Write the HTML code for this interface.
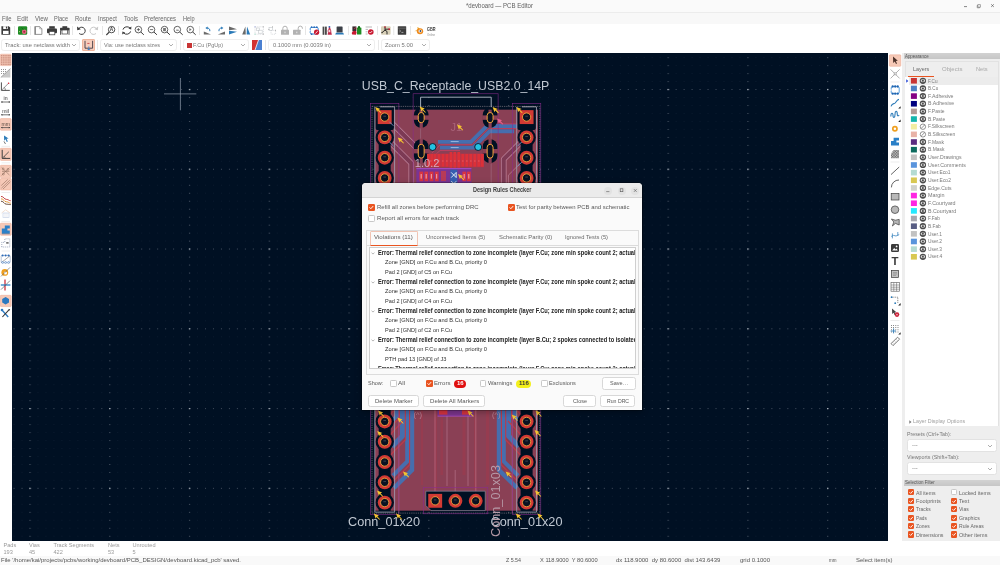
<!DOCTYPE html><html><head><meta charset="utf-8"><title>devboard — PCB Editor</title><style>
*{box-sizing:border-box;margin:0;padding:0}
html,body{width:1000px;height:565px;overflow:hidden;background:#fff;font-family:"Liberation Sans",sans-serif;color:#5c5c5c}
.abs{position:absolute}
.t{position:absolute;white-space:nowrap;line-height:1}
#root{position:absolute;left:0;top:0;width:1000px;height:565px;will-change:transform;overflow:hidden}
#title{left:0;top:0;width:1000px;height:13.3px;background:#fafafa;border-bottom:0.8px solid #ececec}
#menu{left:0;top:13.3px;width:1000px;height:10.4px;background:#f8f8f8}
#tb1{left:0;top:23.7px;width:1000px;height:29px;background:#fff}
.dd{position:absolute;top:39.2px;height:12px;border:0.7px solid #eeeeee;border-radius:2.8px;background:#fff}
.sep{position:absolute;width:0.8px;background:#e8e8e8}
#canvas{left:12px;top:53px;width:876px;height:488px;background:#001023;overflow:hidden}
#ltb{left:0;top:53px;width:12px;height:488px;background:#fff}
#rtb{left:888px;top:53px;width:14.4px;height:488px;background:#fff}
#app{left:902.4px;top:53px;width:97.6px;height:425px;background:#eeeeee}
#self{left:902.4px;top:478px;width:97.6px;height:63px;background:#eeeeee}
#msg{left:0;top:541px;width:1000px;height:15px;background:#fff}
#status{left:0;top:556px;width:1000px;height:9px;background:#f9f9f9}
.cb{position:absolute;width:6.6px;height:6.6px;border-radius:1.3px;background:#e95420}
.cbo{position:absolute;width:6.6px;height:6.6px;border-radius:1.3px;background:#fff;border:0.6px solid #c8c8c8}
</style></head><body><div id="root">
<div id="title" class="abs"></div>
<div class="t" style="left:466px;top:3px;font-size:6.3px;color:#606060;transform:scaleX(0.9619);transform-origin:0 0;">*devboard — PCB Editor</div>
<svg class="abs" style="left:920px;top:0" width="80" height="13" viewBox="920 0 80 13"><g stroke="#555" stroke-width="0.7" fill="none"><path d="M964 6.6h3"/><path d="M977.8 4.6h2.6v2.6h-2.6z M977.8 5.4h-0.6v2.4h2.4v-0.6" stroke-width="0.5"/><path d="M991.2 4.3l2.6 2.6m0-2.6l-2.6 2.6"/></g></svg>
<div id="menu" class="abs"></div>
<div class="t" style="left:1.5px;top:16px;font-size:6.3px;color:#666;transform:scaleX(0.9354);transform-origin:0 0;">File</div>
<div class="t" style="left:17px;top:16px;font-size:6.3px;color:#666;transform:scaleX(1.0129);transform-origin:0 0;">Edit</div>
<div class="t" style="left:35px;top:16px;font-size:6.3px;color:#666;transform:scaleX(0.9596);transform-origin:0 0;">View</div>
<div class="t" style="left:54px;top:16px;font-size:6.3px;color:#666;transform:scaleX(0.8880);transform-origin:0 0;">Place</div>
<div class="t" style="left:75px;top:16px;font-size:6.3px;color:#666;transform:scaleX(0.9517);transform-origin:0 0;">Route</div>
<div class="t" style="left:97.5px;top:16px;font-size:6.3px;color:#666;transform:scaleX(0.9354);transform-origin:0 0;">Inspect</div>
<div class="t" style="left:123.5px;top:16px;font-size:6.3px;color:#666;transform:scaleX(0.9522);transform-origin:0 0;">Tools</div>
<div class="t" style="left:144px;top:16px;font-size:6.3px;color:#666;transform:scaleX(0.9425);transform-origin:0 0;">Preferences</div>
<div class="t" style="left:182.5px;top:16px;font-size:6.3px;color:#666;transform:scaleX(0.8878);transform-origin:0 0;">Help</div>
<div id="tb1" class="abs"></div>
<svg class="abs" style="left:0;top:24px" width="450" height="14" viewBox="0 24 450 14">
<rect x="14.0" y="26" width="0.8" height="9" fill="#e0e0e0"/>
<rect x="30.0" y="26" width="0.8" height="9" fill="#e0e0e0"/>
<rect x="72.19999999999999" y="26" width="0.8" height="9" fill="#e0e0e0"/>
<rect x="102.0" y="26" width="0.8" height="9" fill="#e0e0e0"/>
<rect x="118.0" y="26" width="0.8" height="9" fill="#e0e0e0"/>
<rect x="199.2" y="26" width="0.8" height="9" fill="#e0e0e0"/>
<rect x="305.20000000000005" y="26" width="0.8" height="9" fill="#e0e0e0"/>
<rect x="348.0" y="26" width="0.8" height="9" fill="#e0e0e0"/>
<rect x="377.0" y="26" width="0.8" height="9" fill="#e0e0e0"/>
<rect x="393.40000000000003" y="26" width="0.8" height="9" fill="#e0e0e0"/>
<rect x="410.20000000000005" y="26" width="0.8" height="9" fill="#e0e0e0"/>
<path d="M1.4 26.2h7.4l1.4 1.4v7.2h-8.8z" fill="#3c3c3c"/><rect x="3.2" y="26.2" width="4.6" height="2.8" fill="#fff"/><rect x="5.9" y="26.6" width="1.2" height="2" fill="#3c3c3c"/><rect x="3" y="30.8" width="5.6" height="3.2" fill="#fff"/>
<rect x="18" y="26.2" width="9.2" height="8.6" rx="1.2" fill="#1e8c24"/><circle cx="24.2" cy="31.8" r="2.4" fill="#e06a80"/><circle cx="24.2" cy="31.8" r="1" fill="#b02040"/><circle cx="19.8" cy="31.6" r="0.7" fill="#e8f0a0"/><path d="M19.8 31.6h2M21.5 27.5l2 2" stroke="#0c5c14" stroke-width="0.6"/>
<path d="M35.3 26.6h4.4l2.2 2.2v5.6h-6.6z" fill="#fff" stroke="#8c8c8c" stroke-width="0.9"/><path d="M39.7 26.6v2.2h2.2" fill="none" stroke="#8c8c8c" stroke-width="0.6"/><path d="M35 26.3v8.6" stroke="#6a6a6a" stroke-width="0.9"/>
<rect x="49.2" y="26.2" width="5.6" height="2.6" fill="#3c3c3c"/><rect x="47" y="28.6" width="10" height="4.6" rx="1" fill="#3c3c3c"/><rect x="49.2" y="31.4" width="5.6" height="3.4" fill="#fff" stroke="#3c3c3c" stroke-width="0.7"/>
<rect x="62.4" y="26.2" width="4.8" height="2" fill="#3c3c3c"/><rect x="60" y="27.8" width="9.6" height="2.8" rx="0.6" fill="#3c3c3c"/><rect x="62" y="30" width="5.6" height="4" fill="#fff" stroke="#3c3c3c" stroke-width="0.7"/><path d="M60.6 30.4v4.4M69 30.4v4.4" stroke="#3c3c3c" stroke-width="0.9"/>
<path d="M78.2 29.6a3.6 3.6 0 1 1 1 3.9" fill="none" stroke="#3c3c3c" stroke-width="1"/><path d="M77 26.4l0.3 3.8 3.6-0.9z" fill="#3c3c3c"/>
<path d="M97 29.6a3.6 3.6 0 1 0 -1 3.9" fill="none" stroke="#c8c8c8" stroke-width="1"/><path d="M98.2 26.4l-0.3 3.8-3.6-0.9z" fill="#c8c8c8"/>
<circle cx="111.6" cy="29.6" r="3.2" fill="#fff" stroke="#3c3c3c" stroke-width="0.9"/><path d="M109.3 32l-3 3" stroke="#3c3c3c" stroke-width="1.1"/><text x="111.6" y="31.4" font-size="4.8" font-weight="bold" text-anchor="middle" fill="#3c3c3c" style="font-family:&quot;Liberation Sans&quot;,sans-serif">A</text>
<path d="M123 29.6a4 3.4 0 0 1 7-1.6M130.6 31.4a4 3.4 0 0 1 -7 1.6" fill="none" stroke="#3c3c3c" stroke-width="1"/><path d="M131.4 26.4l-0.2 3-2.8-0.8zM122.2 34.6l0.2-3 2.8 0.8z" fill="#3c3c3c"/>
<circle cx="138.4" cy="29.6" r="3.3" fill="#fff" stroke="#3c3c3c" stroke-width="0.8"/><path d="M140.8 32l3 2.8" stroke="#3c3c3c" stroke-width="1"/>
<path d="M136.8 29.6h3.2M138.4 28v3.2" stroke="#3c3c3c" stroke-width="0.7"/>
<circle cx="151.5" cy="29.6" r="3.3" fill="#fff" stroke="#3c3c3c" stroke-width="0.8"/><path d="M153.9 32l3 2.8" stroke="#3c3c3c" stroke-width="1"/>
<path d="M149.9 29.6h3.2" stroke="#3c3c3c" stroke-width="0.7"/>
<circle cx="164.5" cy="29.6" r="3.3" fill="#fff" stroke="#3c3c3c" stroke-width="0.8"/><path d="M166.9 32l3 2.8" stroke="#3c3c3c" stroke-width="1"/>
<rect x="163.1" y="28" width="2.8" height="3.2" fill="#777"/>
<circle cx="177.3" cy="29.6" r="3.3" fill="#fff" stroke="#3c3c3c" stroke-width="0.8"/><path d="M179.70000000000002 32l3 2.8" stroke="#3c3c3c" stroke-width="1"/>
<path d="M175.9 30.6l1-1.4 1 0.8 0.8-0.4v1.2z" fill="#666"/>
<circle cx="190.3" cy="29.6" r="3.3" fill="#fff" stroke="#3c3c3c" stroke-width="0.8"/><path d="M192.70000000000002 32l3 2.8" stroke="#3c3c3c" stroke-width="1"/>
<path d="M189.3 28v3.2l2.4-1.6z" fill="#777"/>
<path d="M203.8 34.4h7.2l-7.2-3z" fill="#6a6a6a"/><path d="M209.8 31.2a2.6 2.6 0 0 0 -3-3.2" fill="none" stroke="#2a7ab8" stroke-width="1"/><path d="M205.4 28l2.2-1.6v3z" fill="#2a7ab8"/>
<path d="M225 34.4h-7.2l7.2-3z" fill="#6a6a6a"/><path d="M219 31.2a2.6 2.6 0 0 1 3-3.2" fill="none" stroke="#2a7ab8" stroke-width="1"/><path d="M223.4 28l-2.2-1.6v3z" fill="#2a7ab8"/>
<path d="M229 26.4l8 2.8-8 1z" fill="#6a6a6a"/><path d="M229 34.6l8-2.8-8-1z" fill="#2a7ab8"/>
<path d="M242.2 34.6l3.2-8 0.4 8z" fill="#6a6a6a"/><path d="M250.2 34.6l-3.2-8-0.4 8z" fill="#2a7ab8"/>
<g fill="none" stroke="#c4c8cc" stroke-width="0.6"><rect x="255" y="26.8" width="8.4" height="7.4" stroke-dasharray="1 0.8"/><rect x="256.4" y="28" width="3" height="2.6"/><rect x="258.6" y="30.2" width="3.6" height="3"/></g><rect x="254.4" y="26.2" width="1.2" height="1.2" fill="#b0b8e0"/><rect x="262.8" y="26.2" width="1.2" height="1.2" fill="#c0c0c0"/><rect x="254.4" y="33.6" width="1.2" height="1.2" fill="#b0e0d0"/><rect x="262.8" y="33.6" width="1.2" height="1.2" fill="#c0c0c0"/>
<g fill="none" stroke="#c4c8cc" stroke-width="0.6"><rect x="269" y="27.6" width="3.6" height="3" /><rect x="271" y="30.4" width="4.6" height="3.8" stroke-dasharray="1 0.8"/></g><rect x="268.4" y="29" width="1" height="1" fill="#aaa"/><rect x="275" y="29.8" width="1" height="1" fill="#aaa"/><rect x="272" y="26.4" width="1" height="1" fill="#aaa"/>
<rect x="281" y="29.8" width="8" height="5" rx="0.5" fill="#b2b2b2"/><path d="M282.8 30v-1.6a2.2 2.2 0 0 1 4.4 0V30" fill="none" stroke="#b2b2b2" stroke-width="1"/><rect x="284.5" y="31.6" width="1" height="1.6" fill="#e8e8e8"/>
<rect x="293" y="29.8" width="7.6" height="5" rx="0.5" fill="#b2b2b2"/><path d="M298.2 30v-1.8a2.1 2.1 0 0 1 4.2 0v0.6" fill="none" stroke="#b2b2b2" stroke-width="1"/><rect x="296.3" y="31.6" width="1" height="1.6" fill="#e8e8e8"/>
<rect x="310.2" y="27.4" width="8" height="6.6" rx="1.4" fill="#fff" stroke="#3a8ad8" stroke-width="1"/>
<circle cx="311.6" cy="27.2" r="0.85" fill="#2a6ab8"/>
<circle cx="314.2" cy="27.2" r="0.85" fill="#2a6ab8"/>
<circle cx="316.8" cy="27.2" r="0.85" fill="#2a6ab8"/>
<circle cx="311.6" cy="34.2" r="0.85" fill="#2a6ab8"/><circle cx="309.8" cy="30.6" r="0.8" fill="#fff"/>
<circle cx="316.6" cy="32.2" r="2.6" fill="#c81830"/><path d="M315.4 33.4l2.4-2.4" stroke="#fff" stroke-width="0.9"/>
<rect x="322.6" y="26.6" width="1.8" height="8.2" fill="#4a4a4a"/><rect x="325" y="26.6" width="1.8" height="8.2" fill="#4a4a4a"/><path d="M327.6 34.8l1.4-8 1 0.1 1.9 7.9z" fill="#c02848"/><circle cx="329.4" cy="31" r="1.5" fill="#f4d8dc" stroke="#c02848" stroke-width="0.6"/><rect x="328.6" y="26" width="1.6" height="1.6" fill="#3a6ab8"/>
<rect x="336.6" y="26.4" width="6" height="6.2" rx="0.6" fill="#3c4048"/><path d="M335.2 34.4h8.8l-0.8-1.6h-7.2z" fill="#2a7ab8"/>
<rect x="352.4" y="26.4" width="4" height="5" fill="#3a2a30"/><path d="M352.2 34.6a2.4 2.4 0 0 1 4.4-2.4l-0.6 2.6z" fill="#c81830"/><rect x="357" y="27.6" width="4.4" height="7" rx="0.5" fill="#1e8c24"/><rect x="358" y="26.2" width="2" height="2" fill="#0c6c14"/><path d="M354 29l1.6-1.4 1.4 1.8" stroke="#e04050" stroke-width="0.6" fill="none"/>
<path d="M365.6 27h6.4M365.6 29.4h2.4M365.6 31.8h2M365.6 34h2" stroke="#9a9a9a" stroke-width="0.7"/><circle cx="370.8" cy="32" r="2.8" fill="#c81830"/><path d="M369.4 32l1 1 1.8-2" stroke="#fff" stroke-width="0.8" fill="none"/>
<rect x="381" y="26.2" width="9.6" height="8.6" rx="1" fill="#d8d0b8"/><path d="M385 26.6v3.6l-2.8 2.2M385 30.2l2 1.2v3M385 29.2h4" stroke="#1c1c1c" stroke-width="0.9" fill="none"/><circle cx="385" cy="27" r="0.8" fill="#c81830"/><circle cx="389.2" cy="29.2" r="0.9" fill="#c81830"/><circle cx="382" cy="32.6" r="0.7" fill="#1c1c1c"/>
<rect x="397.8" y="26.2" width="8.4" height="8.6" rx="0.6" fill="#3c3c3c"/><path d="M398.2 28.2h7.6" stroke="#888" stroke-width="0.5"/><path d="M399.4 30l1.2 1-1.2 1M401.4 32.4h2" stroke="#e8e8e8" stroke-width="0.6" fill="none"/>
<path d="M414.4 31.6l3.6-2.6-1-1.2 1-0.6 2.4 2z" fill="#e8a020"/><ellipse cx="420" cy="31.2" rx="3.2" ry="3" fill="#ee8a1c"/><ellipse cx="420.2" cy="31" rx="1.7" ry="1.5" fill="#fff"/><circle cx="420.4" cy="31" r="0.9" fill="#2a4a78"/>
</svg>
<div class="t" style="left:427px;top:28px;font-size:4.6px;color:#3c3c3c;font-weight:bold;transform:scaleX(0.8416);transform-origin:0 0;">GBR</div>
<div class="t" style="left:427.4px;top:34px;font-size:3.2px;color:#909090;transform:scaleX(0.8895);transform-origin:0 0;">Online</div>
<div class="dd" style="left:1px;width:78.6px"></div>
<div class="t" style="left:5.1px;top:42px;font-size:6.0px;color:#777;transform:scaleX(0.9666);transform-origin:0 0;">Track: use netclass width</div>
<svg class="abs" style="left:71px;top:43.2px" width="6" height="4" viewBox="0 0 6 4"><path d="M1 1l2 2 2-2" stroke="#777" stroke-width="0.6" fill="none"/></svg>
<div class="dd" style="left:99.6px;width:77.4px"></div>
<div class="t" style="left:104px;top:42px;font-size:6.0px;color:#777;transform:scaleX(0.9242);transform-origin:0 0;">Via: use netclass sizes</div>
<svg class="abs" style="left:167.9px;top:43.2px" width="6" height="4" viewBox="0 0 6 4"><path d="M1 1l2 2 2-2" stroke="#777" stroke-width="0.6" fill="none"/></svg>
<div class="dd" style="left:183px;width:65.80000000000001px"></div>
<div class="t" style="left:193px;top:42px;font-size:6.0px;color:#777;transform:scaleX(0.9087);transform-origin:0 0;">F.Cu (PgUp)</div>
<svg class="abs" style="left:240px;top:43.2px" width="6" height="4" viewBox="0 0 6 4"><path d="M1 1l2 2 2-2" stroke="#777" stroke-width="0.6" fill="none"/></svg>
<div class="abs" style="left:186.5px;top:42.5px;width:5.5px;height:5.5px;background:#c83434"></div>
<div class="dd" style="left:268px;width:106.80000000000001px"></div>
<div class="t" style="left:272.5px;top:42px;font-size:6.0px;color:#777;transform:scaleX(0.9607);transform-origin:0 0;">0.1000 mm (0.0039 in)</div>
<svg class="abs" style="left:365.5px;top:43.2px" width="6" height="4" viewBox="0 0 6 4"><path d="M1 1l2 2 2-2" stroke="#777" stroke-width="0.6" fill="none"/></svg>
<div class="dd" style="left:380.5px;width:49.89999999999998px"></div>
<div class="t" style="left:385px;top:42px;font-size:6.0px;color:#777;transform:scaleX(0.9760);transform-origin:0 0;">Zoom 5.00</div>
<svg class="abs" style="left:420.9px;top:43.2px" width="6" height="4" viewBox="0 0 6 4"><path d="M1 1l2 2 2-2" stroke="#777" stroke-width="0.6" fill="none"/></svg>
<div class="sep" style="left:97px;top:40px;height:10px"></div>
<div class="sep" style="left:180px;top:40px;height:10px"></div>
<div class="sep" style="left:265px;top:40px;height:10px"></div>
<div class="sep" style="left:377.5px;top:40px;height:10px"></div>
<div class="abs" style="left:82.2px;top:39.2px;width:12.8px;height:11.6px;background:#f6cdbc;border:0.6px solid #efb49c;border-radius:1px"></div>
<svg class="abs" style="left:82px;top:39px" width="14" height="12" viewBox="82 39 14 12"><path d="M85 40.8v7.4h7.6v-7.4" stroke="#1c1c2c" stroke-width="0.75" fill="none"/><rect x="87.3" y="42.9" width="2.2" height="1.1" fill="#d06060"/><path d="M87 48.9h3.6l-1.8 1.3z" fill="#2a7fd4"/><path d="M88.8 46.4v2.4" stroke="#2a7fd4" stroke-width="0.7"/></svg>
<svg class="abs" style="left:252px;top:40px" width="10" height="10" viewBox="0 0 10 10"><rect width="10" height="10" fill="#4a7fd0"/><path d="M0 0h6.5l-3.5 10h-3z" fill="#d23232"/><path d="M6.5 0l-3.5 10" stroke="#fff" stroke-width="0.8"/></svg>
<div id="canvas" class="abs"><svg class="abs" style="left:0;top:0;filter:blur(0.35px)" width="876" height="488" viewBox="12 53 876 488">
<defs><pattern id="gm" x="5.568999999999999" y="49.114999999999995" width="7.977" height="7.977" patternUnits="userSpaceOnUse"><rect x="0.1" y="0.1" width="0.8" height="0.8" fill="#112136"/></pattern>
<pattern id="gv" x="29.4" y="49.214999999999996" width="79.77000000000001" height="7.977" patternUnits="userSpaceOnUse"><rect x="0" y="0" width="1.2" height="0.8" fill="#4e5a68"/></pattern>
<pattern id="gh" x="5.568999999999999" y="89.0" width="7.977" height="79.77000000000001" patternUnits="userSpaceOnUse"><rect x="0" y="0" width="1" height="1" fill="#3e4a5a"/></pattern>
<pattern id="gx" x="29.3" y="88.9" width="79.77000000000001" height="79.77000000000001" patternUnits="userSpaceOnUse"><rect x="0" y="0" width="1.4" height="1.2" fill="#a8b0b8"/></pattern></defs>
<rect x="12" y="53" width="876" height="488" fill="url(#gm)"/>
<rect x="12" y="53" width="876" height="488" fill="url(#gv)"/>
<rect x="12" y="53" width="876" height="488" fill="url(#gh)"/>
<rect x="12" y="53" width="876" height="488" fill="url(#gx)"/>
<path d="M180.4 78v32.3M164 93.9h32.3" stroke="#9aa6b4" stroke-width="0.9" opacity="0.75" fill="none"/>
<rect x="375.0" y="109.7" width="163.0" height="401.0" fill="#8a4055"/>
<path d="M391 122.3L416 147.3" stroke="#c48aa2" stroke-width="5.5" fill="none" stroke-linejoin="round"/>
<path d="M391 122.3L416 147.3" stroke="#7c3a54" stroke-width="4.2" fill="none" stroke-linejoin="round"/>
<path d="M391 143L411.3 163.3V200" stroke="#c48aa2" stroke-width="5.5" fill="none" stroke-linejoin="round"/>
<path d="M391 143L411.3 163.3V200" stroke="#7c3a54" stroke-width="4.2" fill="none" stroke-linejoin="round"/>
<path d="M520 143L503.7 159.3V200" stroke="#c48aa2" stroke-width="5.5" fill="none" stroke-linejoin="round"/>
<path d="M520 143L503.7 159.3V200" stroke="#7c3a54" stroke-width="4.2" fill="none" stroke-linejoin="round"/>
<path d="M520 163.6L508.4 175.2V200" stroke="#c48aa2" stroke-width="0.7" fill="none" opacity="0.9"/>
<g stroke="#466eae" stroke-width="3.9" fill="none" stroke-linejoin="miter">
<path d="M438 141.9H471L486.9 126H517.5"/><path d="M440 147.6H473.4L489.6 131.2H514"/>
</g>
<g stroke="#b84060" stroke-width="1" fill="none">
<path d="M432 153L440.5 144.7H472.2L488.2 128.6H516"/>
<path d="M434 156L440 150.5H460"/>
<path d="M496.6 120.5L501.4 123.9H520"/>
</g>
<path d="M450.7 141.6h8M450.7 147.6h8" stroke="#9ab8e0" stroke-width="1"/>
<g stroke="#466eae" fill="none" stroke-linejoin="miter">
<path d="M396.8 405V416L391 422" stroke-width="3.8"/>
<path d="M402.5 405V436L392 446.5" stroke-width="5"/>
<path d="M407.2 405V461.5L393 475.7" stroke-width="4"/>
<path d="M412 405V470L394 488" stroke-width="4.4"/>
<path d="M514.2 405V416L520 422" stroke-width="3.8"/>
<path d="M508.5 405V436L519 446.5" stroke-width="5"/>
<path d="M503.8 405V461.5L518 475.7" stroke-width="4"/>
<path d="M499 405V470L517 488" stroke-width="4.4"/>
</g>
<g stroke="#c03a48" stroke-width="1.1" fill="none" opacity="0.95">
<path d="M399.4 405V418L388 429.5"/><path d="M405.3 405V440L390 455.5"/><path d="M409.6 405V465L389 485.6"/>
<path d="M394 410.5L388.5 416"/><path d="M403 421L389 436"/>
<path d="M511.6 405V418L523 429.5"/><path d="M505.7 405V440L521 455.5"/><path d="M501.4 405V465L522 485.6"/>
<path d="M517 410.5L522.5 416"/><path d="M508 421L522 436"/>
</g>
<g fill="#a03a4c" opacity="0.55"><rect x="434" y="405" width="3" height="88"/><rect x="440.5" y="405" width="2.5" height="70"/><rect x="462.5" y="405" width="3" height="70"/><rect x="474" y="405" width="2.6" height="88"/><rect x="486" y="405" width="3" height="80"/><rect x="421" y="405" width="2" height="80"/></g>
<g stroke="#c88aa0" stroke-width="0.6" fill="none" opacity="0.8"><path d="M435 405V494M455.2 470V494M475.8 405V494M398.8 405V513M512.3 405V513M447 405V486M468 405V486"/></g>
<rect x="378.7" y="107.7" width="12" height="404.4" fill="#001023"/>
<rect x="375.5" y="108.1" width="18.4" height="22" rx="2.6" fill="#001023"/>
<circle cx="384.7" cy="137.4" r="9.2" fill="#001023"/>
<circle cx="384.7" cy="157.7" r="9.2" fill="#001023"/>
<circle cx="384.7" cy="178.0" r="9.2" fill="#001023"/>
<circle cx="384.7" cy="198.3" r="9.2" fill="#001023"/>
<circle cx="384.7" cy="218.5" r="9.2" fill="#001023"/>
<circle cx="384.7" cy="238.8" r="9.2" fill="#001023"/>
<circle cx="384.7" cy="259.1" r="9.2" fill="#001023"/>
<circle cx="384.7" cy="279.4" r="9.2" fill="#001023"/>
<circle cx="384.7" cy="299.7" r="9.2" fill="#001023"/>
<circle cx="384.7" cy="320.0" r="9.2" fill="#001023"/>
<circle cx="384.7" cy="340.3" r="9.2" fill="#001023"/>
<circle cx="384.7" cy="360.6" r="9.2" fill="#001023"/>
<circle cx="384.7" cy="380.9" r="9.2" fill="#001023"/>
<circle cx="384.7" cy="401.2" r="9.2" fill="#001023"/>
<circle cx="384.7" cy="421.4" r="9.2" fill="#001023"/>
<circle cx="384.7" cy="441.7" r="9.2" fill="#001023"/>
<circle cx="384.7" cy="462.0" r="9.2" fill="#001023"/>
<circle cx="384.7" cy="482.3" r="9.2" fill="#001023"/>
<circle cx="384.7" cy="502.6" r="9.2" fill="#001023"/>
<rect x="520.6" y="107.7" width="12" height="404.4" fill="#001023"/>
<rect x="517.4" y="108.1" width="18.4" height="22" rx="2.6" fill="#001023"/>
<circle cx="526.6" cy="137.4" r="9.2" fill="#001023"/>
<circle cx="526.6" cy="157.7" r="9.2" fill="#001023"/>
<circle cx="526.6" cy="178.0" r="9.2" fill="#001023"/>
<circle cx="526.6" cy="198.3" r="9.2" fill="#001023"/>
<circle cx="526.6" cy="218.5" r="9.2" fill="#001023"/>
<circle cx="526.6" cy="238.8" r="9.2" fill="#001023"/>
<circle cx="526.6" cy="259.1" r="9.2" fill="#001023"/>
<circle cx="526.6" cy="279.4" r="9.2" fill="#001023"/>
<circle cx="526.6" cy="299.7" r="9.2" fill="#001023"/>
<circle cx="526.6" cy="320.0" r="9.2" fill="#001023"/>
<circle cx="526.6" cy="340.3" r="9.2" fill="#001023"/>
<circle cx="526.6" cy="360.6" r="9.2" fill="#001023"/>
<circle cx="526.6" cy="380.9" r="9.2" fill="#001023"/>
<circle cx="526.6" cy="401.2" r="9.2" fill="#001023"/>
<circle cx="526.6" cy="421.4" r="9.2" fill="#001023"/>
<circle cx="526.6" cy="441.7" r="9.2" fill="#001023"/>
<circle cx="526.6" cy="462.0" r="9.2" fill="#001023"/>
<circle cx="526.6" cy="482.3" r="9.2" fill="#001023"/>
<circle cx="526.6" cy="502.6" r="9.2" fill="#001023"/>
<path d="M374.8 107.0V512.1H394.59999999999997V107.0" stroke="#a0a4b6" stroke-width="0.8" fill="none"/>
<path d="M380.09999999999997 106.80000000000001H394.59999999999997" stroke="#b0b2bc" stroke-width="0.9" fill="none"/>
<rect x="370.4" y="103.6" width="28.5" height="410.8" stroke="#8a2a8e" stroke-width="0.55" fill="none"/>
<path d="M516.7 107.0V512.1H536.5V107.0" stroke="#a0a4b6" stroke-width="0.8" fill="none"/>
<path d="M522.0 106.80000000000001H536.5" stroke="#b0b2bc" stroke-width="0.9" fill="none"/>
<rect x="512.3000000000001" y="103.6" width="28.5" height="410.8" stroke="#8a2a8e" stroke-width="0.55" fill="none"/>
<rect x="372.0" y="106.4" width="167.79999999999995" height="406.70000000000005" stroke="#b4a4a8" stroke-width="0.8" stroke-dasharray="1.3 0.9" fill="none" opacity="0.6"/>
<path d="M420.6 107V97.2h70.6V107" stroke="#b4c0cc" stroke-width="0.9" fill="none"/>
<path d="M420.6 107V183M491.2 107V183" stroke="#b090a8" stroke-width="0.5" fill="none" opacity="0.7"/>
<path d="M413.2 183V93.6H498.2V183" stroke="#8a2a8e" stroke-width="0.55" fill="none"/>
<rect x="413.9" y="107.3" width="14.6" height="20.6" rx="7.3" fill="#001023"/>
<rect x="413.4" y="115.39999999999999" width="15.6" height="4.4" fill="#8a4055"/>
<rect x="419.59999999999997" y="109.7" width="3.2" height="18.699999999999974" fill="#8a4055"/>
<rect x="418.25" y="112.5" width="5.9" height="10.2" rx="2.95" fill="#0a1222" stroke="#f2a43c" stroke-width="1"/>
<rect x="413.9" y="139.2" width="14.6" height="24" rx="7.3" fill="#001023"/>
<rect x="413.4" y="149.0" width="15.6" height="4.4" fill="#8a4055"/>
<rect x="419.59999999999997" y="138.7" width="3.2" height="25.0" fill="#8a4055"/>
<rect x="418.25" y="144.29999999999998" width="5.9" height="13.8" rx="2.95" fill="#0a1222" stroke="#f2a43c" stroke-width="1"/>
<rect x="482.8" y="107.3" width="14.6" height="20.6" rx="7.3" fill="#001023"/>
<rect x="482.3" y="115.39999999999999" width="15.6" height="4.4" fill="#8a4055"/>
<rect x="488.5" y="109.7" width="3.2" height="18.699999999999974" fill="#8a4055"/>
<rect x="487.15000000000003" y="112.5" width="5.9" height="10.2" rx="2.95" fill="#0a1222" stroke="#f2a43c" stroke-width="1"/>
<rect x="482.8" y="139.2" width="14.6" height="24" rx="7.3" fill="#001023"/>
<rect x="482.3" y="149.0" width="15.6" height="4.4" fill="#8a4055"/>
<rect x="488.5" y="138.7" width="3.2" height="25.0" fill="#8a4055"/>
<rect x="487.15000000000003" y="144.29999999999998" width="5.9" height="13.8" rx="2.95" fill="#0a1222" stroke="#f2a43c" stroke-width="1"/>
<circle cx="432.6" cy="147" r="3.5" fill="#22c2e2" stroke="#0a1222" stroke-width="0.9"/>
<circle cx="478.2" cy="147" r="3.5" fill="#22c2e2" stroke="#0a1222" stroke-width="0.9"/>
<rect x="427" y="153.6" width="57" height="13.6" fill="#b83448"/>
<rect x="427.2" y="154" width="2.7" height="12.6" fill="#dc3038"/>
<rect x="430.4" y="154" width="2.7" height="12.6" fill="#dc3038"/>
<rect x="433.6" y="154" width="2.7" height="12.6" fill="#dc3038"/>
<rect x="437.6" y="154" width="2.7" height="12.6" fill="#dc3038"/>
<rect x="441.6" y="154" width="2.7" height="12.6" fill="#dc3038"/>
<rect x="445.6" y="154" width="2.7" height="12.6" fill="#dc3038"/>
<rect x="449.6" y="152" width="2.7" height="15.6" fill="#dc3038"/>
<rect x="453.4" y="152" width="2.7" height="15.6" fill="#dc3038"/>
<rect x="457.4" y="152" width="2.7" height="15.6" fill="#dc3038"/>
<rect x="461.4" y="154" width="2.7" height="12.6" fill="#dc3038"/>
<rect x="465.4" y="154" width="2.7" height="12.6" fill="#dc3038"/>
<rect x="469.4" y="154" width="2.7" height="12.6" fill="#dc3038"/>
<rect x="473.4" y="154" width="2.7" height="12.6" fill="#dc3038"/>
<rect x="477.4" y="154" width="2.7" height="12.6" fill="#dc3038"/>
<rect x="480.8" y="154" width="2.7" height="12.6" fill="#dc3038"/>
<path d="M430 161h52" stroke="#e88a98" stroke-width="0.6" stroke-dasharray="1.6 2.4" opacity="0.8"/>
<rect x="416.4" y="168.4" width="55" height="15" fill="#7a3494"/>
<path d="M416.4 168.6H471.4" stroke="#b050d8" stroke-width="0.8"/>
<rect x="419.4" y="171.6" width="3.8" height="9.6" fill="#d83440"/>
<rect x="420.59999999999997" y="174" width="1.2" height="4.6" fill="#f0b0b8" opacity="0.8"/>
<rect x="424.4" y="171.6" width="3.8" height="9.6" fill="#d83440"/>
<rect x="425.59999999999997" y="174" width="1.2" height="4.6" fill="#f0b0b8" opacity="0.8"/>
<rect x="429.6" y="171.6" width="3.8" height="9.6" fill="#d83440"/>
<rect x="430.8" y="174" width="1.2" height="4.6" fill="#f0b0b8" opacity="0.8"/>
<rect x="434.8" y="171.6" width="3.8" height="9.6" fill="#d83440"/>
<rect x="436.0" y="174" width="1.2" height="4.6" fill="#f0b0b8" opacity="0.8"/>
<rect x="462.4" y="171.6" width="3.8" height="9.6" fill="#d83440"/>
<rect x="463.59999999999997" y="174" width="1.2" height="4.6" fill="#f0b0b8" opacity="0.8"/>
<rect x="467" y="171.6" width="3.8" height="9.6" fill="#d83440"/>
<rect x="468.2" y="174" width="1.2" height="4.6" fill="#f0b0b8" opacity="0.8"/>
<rect x="441" y="171" width="5" height="10" fill="#b83a58"/>
<rect x="450.2" y="169.6" width="7.2" height="14" fill="#345eb0"/><path d="M451.2 172.4l5 5.2v-5.2l-5 5.2M451.2 181.4l2.6 2 2.6-2" stroke="#eef0f8" stroke-width="0.9" fill="none"/>
<rect x="377.75" y="110.15" width="13.9" height="13.9" fill="#d23a34"/>
<circle cx="384.7" cy="117.10" r="4.15" fill="#0a1222" stroke="#f2a43c" stroke-width="0.9"/>
<path d="M383.4 116.20h2.6" stroke="#8a9098" stroke-width="0.7" opacity="0.55"/>
<circle cx="384.7" cy="137.39" r="6.95" fill="#d23a34"/>
<circle cx="384.7" cy="137.39" r="4.15" fill="#0a1222" stroke="#f2a43c" stroke-width="0.9"/>
<path d="M383.4 136.49h2.6" stroke="#8a9098" stroke-width="0.7" opacity="0.55"/>
<circle cx="384.7" cy="157.68" r="6.95" fill="#d23a34"/>
<circle cx="384.7" cy="157.68" r="4.15" fill="#0a1222" stroke="#f2a43c" stroke-width="0.9"/>
<path d="M383.4 156.78h2.6" stroke="#8a9098" stroke-width="0.7" opacity="0.55"/>
<circle cx="384.7" cy="177.97" r="6.95" fill="#d23a34"/>
<circle cx="384.7" cy="177.97" r="4.15" fill="#0a1222" stroke="#f2a43c" stroke-width="0.9"/>
<path d="M383.4 177.07h2.6" stroke="#8a9098" stroke-width="0.7" opacity="0.55"/>
<circle cx="384.7" cy="198.26" r="6.95" fill="#d23a34"/>
<circle cx="384.7" cy="198.26" r="4.15" fill="#0a1222" stroke="#f2a43c" stroke-width="0.9"/>
<path d="M383.4 197.36h2.6" stroke="#8a9098" stroke-width="0.7" opacity="0.55"/>
<circle cx="384.7" cy="218.55" r="6.95" fill="#d23a34"/>
<circle cx="384.7" cy="218.55" r="4.15" fill="#0a1222" stroke="#f2a43c" stroke-width="0.9"/>
<path d="M383.4 217.65h2.6" stroke="#8a9098" stroke-width="0.7" opacity="0.55"/>
<circle cx="384.7" cy="238.84" r="6.95" fill="#d23a34"/>
<circle cx="384.7" cy="238.84" r="4.15" fill="#0a1222" stroke="#f2a43c" stroke-width="0.9"/>
<path d="M383.4 237.94h2.6" stroke="#8a9098" stroke-width="0.7" opacity="0.55"/>
<circle cx="384.7" cy="259.13" r="6.95" fill="#d23a34"/>
<circle cx="384.7" cy="259.13" r="4.15" fill="#0a1222" stroke="#f2a43c" stroke-width="0.9"/>
<path d="M383.4 258.23h2.6" stroke="#8a9098" stroke-width="0.7" opacity="0.55"/>
<circle cx="384.7" cy="279.42" r="6.95" fill="#d23a34"/>
<circle cx="384.7" cy="279.42" r="4.15" fill="#0a1222" stroke="#f2a43c" stroke-width="0.9"/>
<path d="M383.4 278.52h2.6" stroke="#8a9098" stroke-width="0.7" opacity="0.55"/>
<circle cx="384.7" cy="299.71" r="6.95" fill="#d23a34"/>
<circle cx="384.7" cy="299.71" r="4.15" fill="#0a1222" stroke="#f2a43c" stroke-width="0.9"/>
<path d="M383.4 298.81h2.6" stroke="#8a9098" stroke-width="0.7" opacity="0.55"/>
<circle cx="384.7" cy="319.99" r="6.95" fill="#d23a34"/>
<circle cx="384.7" cy="319.99" r="4.15" fill="#0a1222" stroke="#f2a43c" stroke-width="0.9"/>
<path d="M383.4 319.09h2.6" stroke="#8a9098" stroke-width="0.7" opacity="0.55"/>
<circle cx="384.7" cy="340.28" r="6.95" fill="#d23a34"/>
<circle cx="384.7" cy="340.28" r="4.15" fill="#0a1222" stroke="#f2a43c" stroke-width="0.9"/>
<path d="M383.4 339.38h2.6" stroke="#8a9098" stroke-width="0.7" opacity="0.55"/>
<circle cx="384.7" cy="360.57" r="6.95" fill="#d23a34"/>
<circle cx="384.7" cy="360.57" r="4.15" fill="#0a1222" stroke="#f2a43c" stroke-width="0.9"/>
<path d="M383.4 359.67h2.6" stroke="#8a9098" stroke-width="0.7" opacity="0.55"/>
<circle cx="384.7" cy="380.86" r="6.95" fill="#d23a34"/>
<circle cx="384.7" cy="380.86" r="4.15" fill="#0a1222" stroke="#f2a43c" stroke-width="0.9"/>
<path d="M383.4 379.96h2.6" stroke="#8a9098" stroke-width="0.7" opacity="0.55"/>
<circle cx="384.7" cy="401.15" r="6.95" fill="#d23a34"/>
<circle cx="384.7" cy="401.15" r="4.15" fill="#0a1222" stroke="#f2a43c" stroke-width="0.9"/>
<path d="M383.4 400.25h2.6" stroke="#8a9098" stroke-width="0.7" opacity="0.55"/>
<circle cx="384.7" cy="421.44" r="6.95" fill="#d23a34"/>
<circle cx="384.7" cy="421.44" r="4.15" fill="#0a1222" stroke="#f2a43c" stroke-width="0.9"/>
<path d="M383.4 420.54h2.6" stroke="#8a9098" stroke-width="0.7" opacity="0.55"/>
<circle cx="384.7" cy="441.73" r="6.95" fill="#d23a34"/>
<circle cx="384.7" cy="441.73" r="4.15" fill="#0a1222" stroke="#f2a43c" stroke-width="0.9"/>
<path d="M383.4 440.83h2.6" stroke="#8a9098" stroke-width="0.7" opacity="0.55"/>
<circle cx="384.7" cy="462.02" r="6.95" fill="#d23a34"/>
<circle cx="384.7" cy="462.02" r="4.15" fill="#0a1222" stroke="#f2a43c" stroke-width="0.9"/>
<path d="M383.4 461.12h2.6" stroke="#8a9098" stroke-width="0.7" opacity="0.55"/>
<circle cx="384.7" cy="482.31" r="6.95" fill="#d23a34"/>
<circle cx="384.7" cy="482.31" r="4.15" fill="#0a1222" stroke="#f2a43c" stroke-width="0.9"/>
<path d="M383.4 481.41h2.6" stroke="#8a9098" stroke-width="0.7" opacity="0.55"/>
<circle cx="384.7" cy="502.60" r="6.95" fill="#d23a34"/>
<circle cx="384.7" cy="502.60" r="4.15" fill="#0a1222" stroke="#f2a43c" stroke-width="0.9"/>
<path d="M383.4 501.70h2.6" stroke="#8a9098" stroke-width="0.7" opacity="0.55"/>
<rect x="519.65" y="110.15" width="13.9" height="13.9" fill="#d23a34"/>
<circle cx="526.6" cy="117.10" r="4.15" fill="#0a1222" stroke="#f2a43c" stroke-width="0.9"/>
<path d="M525.3000000000001 116.20h2.6" stroke="#8a9098" stroke-width="0.7" opacity="0.55"/>
<circle cx="526.6" cy="137.39" r="6.95" fill="#d23a34"/>
<circle cx="526.6" cy="137.39" r="4.15" fill="#0a1222" stroke="#f2a43c" stroke-width="0.9"/>
<path d="M525.3000000000001 136.49h2.6" stroke="#8a9098" stroke-width="0.7" opacity="0.55"/>
<circle cx="526.6" cy="157.68" r="6.95" fill="#d23a34"/>
<circle cx="526.6" cy="157.68" r="4.15" fill="#0a1222" stroke="#f2a43c" stroke-width="0.9"/>
<path d="M525.3000000000001 156.78h2.6" stroke="#8a9098" stroke-width="0.7" opacity="0.55"/>
<circle cx="526.6" cy="177.97" r="6.95" fill="#d23a34"/>
<circle cx="526.6" cy="177.97" r="4.15" fill="#0a1222" stroke="#f2a43c" stroke-width="0.9"/>
<path d="M525.3000000000001 177.07h2.6" stroke="#8a9098" stroke-width="0.7" opacity="0.55"/>
<circle cx="526.6" cy="198.26" r="6.95" fill="#d23a34"/>
<circle cx="526.6" cy="198.26" r="4.15" fill="#0a1222" stroke="#f2a43c" stroke-width="0.9"/>
<path d="M525.3000000000001 197.36h2.6" stroke="#8a9098" stroke-width="0.7" opacity="0.55"/>
<circle cx="526.6" cy="218.55" r="6.95" fill="#d23a34"/>
<circle cx="526.6" cy="218.55" r="4.15" fill="#0a1222" stroke="#f2a43c" stroke-width="0.9"/>
<path d="M525.3000000000001 217.65h2.6" stroke="#8a9098" stroke-width="0.7" opacity="0.55"/>
<circle cx="526.6" cy="238.84" r="6.95" fill="#d23a34"/>
<circle cx="526.6" cy="238.84" r="4.15" fill="#0a1222" stroke="#f2a43c" stroke-width="0.9"/>
<path d="M525.3000000000001 237.94h2.6" stroke="#8a9098" stroke-width="0.7" opacity="0.55"/>
<circle cx="526.6" cy="259.13" r="6.95" fill="#d23a34"/>
<circle cx="526.6" cy="259.13" r="4.15" fill="#0a1222" stroke="#f2a43c" stroke-width="0.9"/>
<path d="M525.3000000000001 258.23h2.6" stroke="#8a9098" stroke-width="0.7" opacity="0.55"/>
<circle cx="526.6" cy="279.42" r="6.95" fill="#d23a34"/>
<circle cx="526.6" cy="279.42" r="4.15" fill="#0a1222" stroke="#f2a43c" stroke-width="0.9"/>
<path d="M525.3000000000001 278.52h2.6" stroke="#8a9098" stroke-width="0.7" opacity="0.55"/>
<circle cx="526.6" cy="299.71" r="6.95" fill="#d23a34"/>
<circle cx="526.6" cy="299.71" r="4.15" fill="#0a1222" stroke="#f2a43c" stroke-width="0.9"/>
<path d="M525.3000000000001 298.81h2.6" stroke="#8a9098" stroke-width="0.7" opacity="0.55"/>
<circle cx="526.6" cy="319.99" r="6.95" fill="#d23a34"/>
<circle cx="526.6" cy="319.99" r="4.15" fill="#0a1222" stroke="#f2a43c" stroke-width="0.9"/>
<path d="M525.3000000000001 319.09h2.6" stroke="#8a9098" stroke-width="0.7" opacity="0.55"/>
<circle cx="526.6" cy="340.28" r="6.95" fill="#d23a34"/>
<circle cx="526.6" cy="340.28" r="4.15" fill="#0a1222" stroke="#f2a43c" stroke-width="0.9"/>
<path d="M525.3000000000001 339.38h2.6" stroke="#8a9098" stroke-width="0.7" opacity="0.55"/>
<circle cx="526.6" cy="360.57" r="6.95" fill="#d23a34"/>
<circle cx="526.6" cy="360.57" r="4.15" fill="#0a1222" stroke="#f2a43c" stroke-width="0.9"/>
<path d="M525.3000000000001 359.67h2.6" stroke="#8a9098" stroke-width="0.7" opacity="0.55"/>
<circle cx="526.6" cy="380.86" r="6.95" fill="#d23a34"/>
<circle cx="526.6" cy="380.86" r="4.15" fill="#0a1222" stroke="#f2a43c" stroke-width="0.9"/>
<path d="M525.3000000000001 379.96h2.6" stroke="#8a9098" stroke-width="0.7" opacity="0.55"/>
<circle cx="526.6" cy="401.15" r="6.95" fill="#d23a34"/>
<circle cx="526.6" cy="401.15" r="4.15" fill="#0a1222" stroke="#f2a43c" stroke-width="0.9"/>
<path d="M525.3000000000001 400.25h2.6" stroke="#8a9098" stroke-width="0.7" opacity="0.55"/>
<circle cx="526.6" cy="421.44" r="6.95" fill="#d23a34"/>
<circle cx="526.6" cy="421.44" r="4.15" fill="#0a1222" stroke="#f2a43c" stroke-width="0.9"/>
<path d="M525.3000000000001 420.54h2.6" stroke="#8a9098" stroke-width="0.7" opacity="0.55"/>
<circle cx="526.6" cy="441.73" r="6.95" fill="#d23a34"/>
<circle cx="526.6" cy="441.73" r="4.15" fill="#0a1222" stroke="#f2a43c" stroke-width="0.9"/>
<path d="M525.3000000000001 440.83h2.6" stroke="#8a9098" stroke-width="0.7" opacity="0.55"/>
<circle cx="526.6" cy="462.02" r="6.95" fill="#d23a34"/>
<circle cx="526.6" cy="462.02" r="4.15" fill="#0a1222" stroke="#f2a43c" stroke-width="0.9"/>
<path d="M525.3000000000001 461.12h2.6" stroke="#8a9098" stroke-width="0.7" opacity="0.55"/>
<circle cx="526.6" cy="482.31" r="6.95" fill="#d23a34"/>
<circle cx="526.6" cy="482.31" r="4.15" fill="#0a1222" stroke="#f2a43c" stroke-width="0.9"/>
<path d="M525.3000000000001 481.41h2.6" stroke="#8a9098" stroke-width="0.7" opacity="0.55"/>
<circle cx="526.6" cy="502.60" r="6.95" fill="#d23a34"/>
<circle cx="526.6" cy="502.60" r="4.15" fill="#0a1222" stroke="#f2a43c" stroke-width="0.9"/>
<path d="M525.3000000000001 501.70h2.6" stroke="#8a9098" stroke-width="0.7" opacity="0.55"/>
<g stroke="#6f88b8" stroke-width="1" fill="none"><path d="M389.4 121.8L393.4 125.8M389.4 142L393.6 146.2M521.7 142L517.5 146.2M521.7 162.2L517.6 166.4"/></g>
<path d="M425.8 491.2H485.2V510.6H431L425.8 505.4Z" fill="#001023"/>
<path d="M425.8 491.2H485.2V510.6H431L425.8 505.4Z" fill="none" stroke="#8c92a6" stroke-width="0.6"/>
<rect x="423.4" y="487.4" width="64.4" height="26.4" stroke="#8a2a8e" stroke-width="0.55" fill="none"/>
<rect x="428.25" y="493.85" width="13.9" height="13.9" fill="#d23a34"/>
<circle cx="435.2" cy="500.80" r="4.15" fill="#0a1222" stroke="#f2a43c" stroke-width="0.9"/>
<path d="M433.9 499.90h2.6" stroke="#8a9098" stroke-width="0.7" opacity="0.55"/>
<circle cx="455.4" cy="500.80" r="6.95" fill="#d23a34"/>
<circle cx="455.4" cy="500.80" r="4.15" fill="#0a1222" stroke="#f2a43c" stroke-width="0.9"/>
<path d="M454.09999999999997 499.90h2.6" stroke="#8a9098" stroke-width="0.7" opacity="0.55"/>
<circle cx="475.7" cy="500.80" r="6.95" fill="#d23a34"/>
<circle cx="475.7" cy="500.80" r="4.15" fill="#0a1222" stroke="#f2a43c" stroke-width="0.9"/>
<path d="M474.4 499.90h2.6" stroke="#8a9098" stroke-width="0.7" opacity="0.55"/>
<text x="361.8" y="90.4" font-size="13.4" fill="#c0c8d2" textLength="187.5" lengthAdjust="spacingAndGlyphs" style="font-family:&quot;Liberation Sans&quot;,sans-serif">USB_C_Receptacle_USB2.0_14P</text>
<text x="348" y="526.3" font-size="13.4" fill="#c0c8d2" textLength="72" lengthAdjust="spacingAndGlyphs" style="font-family:&quot;Liberation Sans&quot;,sans-serif">Conn_01x20</text>
<text x="490.5" y="526.3" font-size="13.4" fill="#c0c8d2" textLength="72" lengthAdjust="spacingAndGlyphs" style="font-family:&quot;Liberation Sans&quot;,sans-serif">Conn_01x20</text>
<text transform="translate(499.6 537) rotate(-90)" font-size="13.4" fill="#b79aa8" textLength="72" lengthAdjust="spacingAndGlyphs" style="font-family:&quot;Liberation Sans&quot;,sans-serif">Conn_01x03</text>
<text x="450.6" y="131" font-size="11" fill="#b06a80" opacity="0.85" style="font-family:&quot;Liberation Sans&quot;,sans-serif">J1</text>
<text x="414.8" y="167.4" font-size="10" fill="#d4b4c4" opacity="0.95" textLength="24.6" lengthAdjust="spacingAndGlyphs" style="font-family:&quot;Liberation Sans&quot;,sans-serif">1.0.2</text>
<text x="413.5" y="417" font-size="7.5" fill="#c890a4" opacity="0.85" style="font-family:&quot;Liberation Sans&quot;,sans-serif">(^)</text>
<text x="492" y="417" font-size="7.5" fill="#c890a4" opacity="0.85" style="font-family:&quot;Liberation Sans&quot;,sans-serif">(^)</text>
<rect x="437.5" y="405" width="36" height="11" fill="#7a3494" opacity="0.9"/><rect x="439" y="405" width="8.4" height="9.6" fill="#d83440"/><rect x="462" y="405" width="8.4" height="9.6" fill="#d83440"/><path d="M437.5 416.2H473.5" stroke="#b050d8" stroke-width="0.7"/>
<path transform="translate(375.2 107)" d="M0 0L5.2 1.9L3.5 2.7L6.2 5.6L5.6 6.2L2.7 3.5L1.9 5.2Z" fill="#f4c430"/>
<path transform="translate(397.8 137.4)" d="M0 0L5.2 1.9L3.5 2.7L6.2 5.6L5.6 6.2L2.7 3.5L1.9 5.2Z" fill="#f4c430"/>
<path transform="translate(419.6 106.6)" d="M0 0L5.2 1.9L3.5 2.7L6.2 5.6L5.6 6.2L2.7 3.5L1.9 5.2Z" fill="#f4c430"/>
<path transform="translate(492.6 107)" d="M0 0L5.2 1.9L3.5 2.7L6.2 5.6L5.6 6.2L2.7 3.5L1.9 5.2Z" fill="#f4c430"/>
<path transform="translate(516.4 107)" d="M0 0L5.2 1.9L3.5 2.7L6.2 5.6L5.6 6.2L2.7 3.5L1.9 5.2Z" fill="#f4c430"/>
<path transform="translate(457 124.4)" d="M0 0L5.2 1.9L3.5 2.7L6.2 5.6L5.6 6.2L2.7 3.5L1.9 5.2Z" fill="#f4c430"/>
<path transform="translate(458 174)" d="M0 0L5.2 1.9L3.5 2.7L6.2 5.6L5.6 6.2L2.7 3.5L1.9 5.2Z" fill="#f4c430"/>
<path transform="translate(378 410.6)" d="M0 0L5.2 1.9L3.5 2.7L6.2 5.6L5.6 6.2L2.7 3.5L1.9 5.2Z" fill="#f4c430"/>
<path transform="translate(397.4 417.6)" d="M0 0L5.2 1.9L3.5 2.7L6.2 5.6L5.6 6.2L2.7 3.5L1.9 5.2Z" fill="#f4c430"/>
<path transform="translate(377.2 431)" d="M0 0L5.2 1.9L3.5 2.7L6.2 5.6L5.6 6.2L2.7 3.5L1.9 5.2Z" fill="#f4c430"/>
<path transform="translate(403 471.4)" d="M0 0L5.2 1.9L3.5 2.7L6.2 5.6L5.6 6.2L2.7 3.5L1.9 5.2Z" fill="#f4c430"/>
<path transform="translate(377 490.6)" d="M0 0L5.2 1.9L3.5 2.7L6.2 5.6L5.6 6.2L2.7 3.5L1.9 5.2Z" fill="#f4c430"/>
<path transform="translate(373.8 513.6)" d="M0 0L5.2 1.9L3.5 2.7L6.2 5.6L5.6 6.2L2.7 3.5L1.9 5.2Z" fill="#f4c430"/>
<path transform="translate(396 513.6)" d="M0 0L5.2 1.9L3.5 2.7L6.2 5.6L5.6 6.2L2.7 3.5L1.9 5.2Z" fill="#f4c430"/>
<path transform="translate(467.5 410.5)" d="M0 0L5.2 1.9L3.5 2.7L6.2 5.6L5.6 6.2L2.7 3.5L1.9 5.2Z" fill="#f4c430"/>
<path transform="translate(511.6 414.6)" d="M0 0L5.2 1.9L3.5 2.7L6.2 5.6L5.6 6.2L2.7 3.5L1.9 5.2Z" fill="#f4c430"/>
<path transform="translate(535.5 410.6)" d="M0 0L5.2 1.9L3.5 2.7L6.2 5.6L5.6 6.2L2.7 3.5L1.9 5.2Z" fill="#f4c430"/>
<path transform="translate(534.6 430)" d="M0 0L5.2 1.9L3.5 2.7L6.2 5.6L5.6 6.2L2.7 3.5L1.9 5.2Z" fill="#f4c430"/>
<path transform="translate(505.6 471.4)" d="M0 0L5.2 1.9L3.5 2.7L6.2 5.6L5.6 6.2L2.7 3.5L1.9 5.2Z" fill="#f4c430"/>
<path transform="translate(535 490.6)" d="M0 0L5.2 1.9L3.5 2.7L6.2 5.6L5.6 6.2L2.7 3.5L1.9 5.2Z" fill="#f4c430"/>
<path transform="translate(515.8 513.6)" d="M0 0L5.2 1.9L3.5 2.7L6.2 5.6L5.6 6.2L2.7 3.5L1.9 5.2Z" fill="#f4c430"/>
<path transform="translate(537.4 513.6)" d="M0 0L5.2 1.9L3.5 2.7L6.2 5.6L5.6 6.2L2.7 3.5L1.9 5.2Z" fill="#f4c430"/>
<path transform="translate(497 118.4)" d="M0 0L5.2 1.9L3.5 2.7L6.2 5.6L5.6 6.2L2.7 3.5L1.9 5.2Z" fill="#e8608c"/>
</svg></div>
<div id="ltb" class="abs"></div><svg class="abs" style="left:0;top:53px" width="12" height="488" viewBox="0 53 12 488">
<rect x="1.5" y="145.89999999999998" width="8.5" height="0.6" fill="#e2e2e2"/>
<rect x="1.5" y="162.6" width="8.5" height="0.6" fill="#e2e2e2"/>
<rect x="1.5" y="192.29999999999998" width="8.5" height="0.6" fill="#e2e2e2"/>
<rect x="1.5" y="221.1" width="8.5" height="0.6" fill="#e2e2e2"/>
<rect x="1.5" y="250.7" width="8.5" height="0.6" fill="#e2e2e2"/>
<rect x="0.3" y="54.2" width="10.9" height="11.399999999999991" rx="0.8" fill="#f6c9b7" stroke="#eba58c" stroke-width="0.5"/>
<rect x="1.3" y="55.3" width="1" height="1" fill="#a05848"/>
<rect x="1.3" y="57.4" width="1" height="1" fill="#a05848"/>
<rect x="1.3" y="59.5" width="1" height="1" fill="#a05848"/>
<rect x="1.3" y="61.6" width="1" height="1" fill="#a05848"/>
<rect x="1.3" y="63.7" width="1" height="1" fill="#a05848"/>
<rect x="3.4" y="55.3" width="1" height="1" fill="#a05848"/>
<rect x="3.4" y="57.4" width="1" height="1" fill="#a05848"/>
<rect x="3.4" y="59.5" width="1" height="1" fill="#a05848"/>
<rect x="3.4" y="61.6" width="1" height="1" fill="#a05848"/>
<rect x="3.4" y="63.7" width="1" height="1" fill="#a05848"/>
<rect x="5.5" y="55.3" width="1" height="1" fill="#a05848"/>
<rect x="5.5" y="57.4" width="1" height="1" fill="#a05848"/>
<rect x="5.5" y="59.5" width="1" height="1" fill="#a05848"/>
<rect x="5.5" y="61.6" width="1" height="1" fill="#a05848"/>
<rect x="5.5" y="63.7" width="1" height="1" fill="#a05848"/>
<rect x="7.6" y="55.3" width="1" height="1" fill="#a05848"/>
<rect x="7.6" y="57.4" width="1" height="1" fill="#a05848"/>
<rect x="7.6" y="59.5" width="1" height="1" fill="#a05848"/>
<rect x="7.6" y="61.6" width="1" height="1" fill="#a05848"/>
<rect x="7.6" y="63.7" width="1" height="1" fill="#a05848"/>
<rect x="9.5" y="55.3" width="1" height="1" fill="#a05848"/>
<rect x="9.5" y="57.4" width="1" height="1" fill="#a05848"/>
<rect x="9.5" y="59.5" width="1" height="1" fill="#a05848"/>
<rect x="9.5" y="61.6" width="1" height="1" fill="#a05848"/>
<rect x="9.5" y="63.7" width="1" height="1" fill="#a05848"/>
<rect x="1.2000000000000002" y="69.1" width="0.8" height="0.8" fill="#555"/>
<rect x="1.2000000000000002" y="71.1" width="0.8" height="0.8" fill="#555"/>
<rect x="1.2000000000000002" y="73.1" width="0.8" height="0.8" fill="#555"/>
<rect x="3.2" y="69.1" width="0.8" height="0.8" fill="#555"/>
<rect x="3.2" y="71.1" width="0.8" height="0.8" fill="#555"/>
<rect x="3.2" y="73.1" width="0.8" height="0.8" fill="#555"/>
<rect x="5.199999999999999" y="69.1" width="0.8" height="0.8" fill="#555"/>
<rect x="5.199999999999999" y="71.1" width="0.8" height="0.8" fill="#555"/>
<rect x="5.199999999999999" y="73.1" width="0.8" height="0.8" fill="#555"/>
<path d="M0.8 77.4L10.4 68.6V77.4Z" fill="#c8c8c8"/><path d="M0.8 77.4L10.4 68.6" stroke="#8a8a8a" stroke-width="0.7"/>
<path d="M1.4 82.4v8h8.4" fill="none" stroke="#3c3c3c" stroke-width="0.9"/><path d="M1.6 90.2l6.6-6.6" stroke="#6a6a6a" stroke-width="0.7"/><circle cx="8.6" cy="83.2" r="0.8" fill="#d02030"/><path d="M5.4 90.2a4 4 0 0 0-1.2-2.8" stroke="#3c3c3c" stroke-width="0.6" fill="none"/>
<path d="M1.2 102h8.8" stroke="#3c3c3c" stroke-width="0.7"/><path d="M1 102l1.4-0.9v1.8zM10.2 102l-1.4-0.9v1.8z" fill="#3c3c3c"/>
<path d="M1.2 114.8h8.8" stroke="#3c3c3c" stroke-width="0.7"/><path d="M1 114.8l1.4-0.9v1.8zM10.2 114.8l-1.4-0.9v1.8z" fill="#3c3c3c"/>
<rect x="0.3" y="118.6" width="10.9" height="11.599999999999994" rx="0.8" fill="#f6c9b7" stroke="#eba58c" stroke-width="0.5"/>
<path d="M1.2 127.6h8.8" stroke="#3c3c3c" stroke-width="0.7"/><path d="M1 127.6l1.4-0.9v1.8zM10.2 127.6l-1.4-0.9v1.8z" fill="#3c3c3c"/>
<path d="M4 135.4l4.6 3-2 0.4 1.2 2.6-1 0.5-1.2-2.6-1.4 1.4z" fill="#2a7ab8"/><path d="M4.2 143h3" stroke="#333" stroke-width="0.6" transform="rotate(60 5.5 142)"/>
<rect x="0.3" y="148.3" width="10.9" height="12.099999999999994" rx="0.8" fill="#f6c9b7" stroke="#eba58c" stroke-width="0.5"/>
<path d="M2.2 149.8v8.6h8" fill="none" stroke="#3c3c3c" stroke-width="1"/><path d="M2.4 158.2l6.4-6.4" stroke="#3c3c3c" stroke-width="0.8"/><path d="M5 158.4a3 3 0 0 0-0.8-2.2" stroke="#3c3c3c" stroke-width="0.6" fill="none"/>
<rect x="0.3" y="165.3" width="10.9" height="12.299999999999983" rx="0.8" fill="#f6c9b7" stroke="#eba58c" stroke-width="0.5"/>
<g stroke="#8a6a5a" stroke-width="0.6" fill="none"><path d="M1.6 167.4l7.8 7.6M1.6 175.4l7.8-7.6M2 171.4h7.4"/></g><circle cx="3.2" cy="169" r="1" fill="none" stroke="#8a6a5a" stroke-width="0.5"/><circle cx="8" cy="169.4" r="1" fill="none" stroke="#8a6a5a" stroke-width="0.5"/><circle cx="3.4" cy="174" r="1" fill="none" stroke="#8a6a5a" stroke-width="0.5"/>
<rect x="0.3" y="178.5" width="10.9" height="11.5" rx="0.8" fill="#f6c9b7" stroke="#eba58c" stroke-width="0.5"/>
<g stroke="#a07868" stroke-width="0.7" fill="none"><path d="M1.4 188.2l8.4-8M3 189l7.4-7.2M1.2 185.6l6.6-6.2"/></g>
<g fill="none" stroke-width="0.9"><path d="M1 196.4c3 0 3 3 5.4 3s2.4 1.4 4.4 1.4" stroke="#c03030"/><path d="M1 198.8c3 0 3 3 5.4 3s2.4 1.4 4.4 1.4" stroke="#e08a20"/><path d="M1 201.2c3 0 3 3 5.4 3s2.4 0.4 4.4 0.4" stroke="#5a3a2a"/></g>
<path d="M1.6 213l4-3.2 4.4 3.2" fill="none" stroke="#f0d8c8" stroke-width="0.8"/><rect x="3" y="213" width="6" height="4.4" fill="none" stroke="#c8d4e8" stroke-width="0.7"/><path d="M5 213v4.4M7 213v4.4" stroke="#d8dce8" stroke-width="0.6"/>
<rect x="0.3" y="223.2" width="10.9" height="12.100000000000023" rx="0.8" fill="#f6c9b7" stroke="#eba58c" stroke-width="0.5"/>
<path d="M1.8 233.6v-5h3v-3h5v3h-2.4v2h2.4v3z" fill="#2a80c8"/><path d="M1.8 233.8h8" stroke="#1c5c98" stroke-width="0.6"/>
<g fill="none" stroke="#6a7a9a" stroke-width="0.7" stroke-dasharray="0.9 1.1"><path d="M1.8 247v-4.6h3v-3.6h5v8.2z"/></g><rect x="6.2" y="242.2" width="2.4" height="1.4" fill="#555"/>
<rect x="1.2" y="255.4" width="9" height="7.4" rx="0.8" fill="#fff" stroke="#8aa0c0" stroke-width="0.6"/><path d="M1.6 262.4l8.4-6.6" stroke="#555" stroke-width="0.5"/>
<circle cx="2.6" cy="255.6" r="1" fill="#2a6ab8"/><circle cx="2.6" cy="262.4" r="0.9" fill="#fff" stroke="#2a6ab8" stroke-width="0.5"/>
<circle cx="5.6" cy="255.6" r="1" fill="#2a6ab8"/><circle cx="5.6" cy="262.4" r="0.9" fill="#fff" stroke="#2a6ab8" stroke-width="0.5"/>
<circle cx="8.6" cy="255.6" r="1" fill="#2a6ab8"/><circle cx="8.6" cy="262.4" r="0.9" fill="#fff" stroke="#2a6ab8" stroke-width="0.5"/>
<circle cx="4.8" cy="272.4" r="3.4" fill="#f0a020"/><circle cx="5.4" cy="273" r="1.6" fill="#fff"/><path d="M1 276.4l9-9" stroke="#555" stroke-width="0.6"/>
<path d="M5 279.6v10.8" stroke="#d03040" stroke-width="1.3"/><path d="M0.8 285h9.6" stroke="#2a80c8" stroke-width="1.3"/><path d="M1 289.6l9-9" stroke="#444" stroke-width="0.6"/>
<rect x="0.3" y="295.3" width="10.9" height="11.300000000000011" rx="0.8" fill="#f6c9b7" stroke="#eba58c" stroke-width="0.5"/>
<path d="M5.6 297l3.4 2v3.6l-3.4 2-3.4-2v-3.6z" fill="#2a78c0"/>
<path d="M1.6 309.6l6.6 7.4" stroke="#2a78c0" stroke-width="1.4"/><path d="M9.4 309.4l-7 7.6" stroke="#333" stroke-width="1.1"/><circle cx="2" cy="310" r="1.3" fill="#2a78c0"/><path d="M8.6 309l1.6 0.4-0.6 1.4z" fill="#333"/>
</svg>
<div class="t" style="left:3.6px;top:96px;font-size:5.2px;color:#333;">in</div>
<div class="t" style="left:2.2px;top:109px;font-size:5.2px;color:#333;">mil</div>
<div class="t" style="left:1.6px;top:122px;font-size:5.0px;color:#5a4a40;">mm</div>
<div id="rtb" class="abs"></div><svg class="abs" style="left:888px;top:53px" width="15" height="300" viewBox="888 53 15 300">
<rect x="889.4" y="54.8" width="11.4" height="11.5" rx="0.8" fill="#f6c9b7" stroke="#eba58c" stroke-width="0.5"/>
<rect x="890.5" y="81.7" width="9" height="0.6" fill="#e2e2e2"/>
<rect x="890.5" y="161.7" width="9" height="0.6" fill="#e2e2e2"/>
<rect x="890.5" y="320.2" width="9" height="0.6" fill="#e2e2e2"/>
<path d="M893 56.6l4.8 4.2-2 0.2 1.2 2.6-1 0.5-1.2-2.6-1.6 1.4z" fill="#4a3028"/>
<path d="M890.6 69.4l9 9M899.6 69.4l-9 9" stroke="#7a7a7a" stroke-width="0.6"/><rect x="894.1" y="72.9" width="2" height="2" fill="#fff" stroke="#7a7a7a" stroke-width="0.5"/>
<rect x="891.2" y="86.6" width="8" height="7" rx="1.4" fill="#fff" stroke="#4a96dc" stroke-width="0.9"/>
<circle cx="892.7" cy="86.5" r="1.15" fill="#1f64b0"/><circle cx="892.7" cy="93.7" r="1.15" fill="#1f64b0"/>
<circle cx="895.2" cy="86.5" r="1.15" fill="#1f64b0"/><circle cx="895.2" cy="93.7" r="1.15" fill="#1f64b0"/>
<circle cx="897.7" cy="86.5" r="1.15" fill="#1f64b0"/><circle cx="897.7" cy="93.7" r="1.15" fill="#1f64b0"/>
<circle cx="890.9" cy="90.1" r="0.8" fill="#fff"/>
<path d="M891 106.4c1.4-4 3-2 4.2-3.4s2-3.4 3.8-3.6" fill="none" stroke="#2a7ab8" stroke-width="1.1"/><path d="M900.6 106.2v2.4h-2.4z" fill="#222"/>
<path d="M890.8 116.4c0-4 2.2-4 2.2-1s2 3 2-1 2.2-4 2.2-1 1 3 2 1.6" fill="none" stroke="#2a7ab8" stroke-width="1.1"/><path d="M900.6 119.6v2.4h-2.4z" fill="#222"/>
<circle cx="894.9" cy="128.7" r="2.1" fill="none" stroke="#f0a020" stroke-width="1.7"/>
<path d="M891 145.5v-4.6h2.6v-3.1h5.4v2.6h-2.6v2h2.6v3.1z" fill="#2a80c8"/>
<defs><pattern id="hat" width="1.6" height="1.6" patternUnits="userSpaceOnUse"><rect width="1.6" height="1.6" fill="#d8d8d8"/><rect width="0.8" height="0.8" fill="#555"/><rect x="0.8" y="0.8" width="0.8" height="0.8" fill="#555"/></pattern></defs>
<path d="M891 158.2v-4.4l2.6-3.8h5.4v8.2z" fill="url(#hat)"/>
<path d="M891 174.6l8.2-7.6" stroke="#3c3c3c" stroke-width="0.8"/>
<path d="M891.4 187.4a7.4 7.4 0 0 1 7.6-7.4" fill="none" stroke="#3c3c3c" stroke-width="0.8"/>
<rect x="891.2" y="193.6" width="7.8" height="6.4" fill="#b8b8b8" stroke="#3c3c3c" stroke-width="0.7"/>
<circle cx="895" cy="209.7" r="3.8" fill="#b8b8b8" stroke="#3c3c3c" stroke-width="0.7"/>
<path d="M891.4 219l4 1.2 3.8-0.8v5.6l-3.8-1.6-3 2.6 1.4-4z" fill="#b8b8b8" stroke="#3c3c3c" stroke-width="0.7" stroke-linejoin="round"/>
<path d="M891.2 236.4l2.4-1 2.4 0.6 3.2-1.4M892.4 233.4v5M897.8 232v3.6" fill="none" stroke="#2a7ab8" stroke-width="0.7"/>
<rect x="891" y="244" width="8" height="8" rx="1.2" fill="#3c3c3c"/><path d="M892.2 250.6l2-2.6 1.4 1.6 1-1 1.2 2z" fill="#fff"/><circle cx="896.6" cy="246.4" r="0.9" fill="#fff"/>
<text x="895" y="265" font-size="11.4" font-weight="bold" text-anchor="middle" fill="#3c3c3c" style="font-family:&quot;Liberation Sans&quot;,sans-serif">T</text>
<rect x="891.4" y="270.4" width="7.2" height="7" fill="#c4c4c4" stroke="#3c3c3c" stroke-width="0.7"/><path d="M893 272.6h4M893 274h4M893 275.4h3" stroke="#777" stroke-width="0.5"/>
<rect x="891" y="282.6" width="8.4" height="8.6" fill="#fff" stroke="#555" stroke-width="0.6"/><path d="M891 285h8.4M891 287.2h8.4M891 289.2h8.4M893.8 282.6v8.6M896.6 282.6v8.6" stroke="#555" stroke-width="0.5"/>
<path d="M891.6 297.2h6.2v6" fill="none" stroke="#333" stroke-width="0.6" stroke-dasharray="1 0.8"/><circle cx="891.6" cy="297.2" r="0.9" fill="#2a7ab8"/><circle cx="895.2" cy="303.2" r="0.9" fill="#2a7ab8"/><path d="M900.6 303v2.4h-2.4z" fill="#222"/>
<path d="M892 308.4l4.4 3.8-1.8 0.2 1 2.4-0.9 0.4-1-2.4-1.5 1.3z" fill="#444"/><circle cx="897" cy="314.6" r="2.3" fill="#c81830"/><path d="M896.1 313.7l1.8 1.8M897.9 313.7l-1.8 1.8" stroke="#fff" stroke-width="0.6"/>
<rect x="891.0" y="325.0" width="0.8" height="0.8" fill="#444"/>
<rect x="891.0" y="327.20000000000005" width="0.8" height="0.8" fill="#444"/>
<rect x="891.0" y="329.40000000000003" width="0.8" height="0.8" fill="#444"/>
<rect x="891.0" y="331.6" width="0.8" height="0.8" fill="#444"/>
<rect x="893.2" y="325.0" width="0.8" height="0.8" fill="#444"/>
<rect x="893.2" y="327.20000000000005" width="0.8" height="0.8" fill="#444"/>
<rect x="893.2" y="329.40000000000003" width="0.8" height="0.8" fill="#444"/>
<rect x="893.2" y="331.6" width="0.8" height="0.8" fill="#444"/>
<rect x="895.4" y="325.0" width="0.8" height="0.8" fill="#444"/>
<rect x="895.4" y="327.20000000000005" width="0.8" height="0.8" fill="#444"/>
<rect x="895.4" y="329.40000000000003" width="0.8" height="0.8" fill="#444"/>
<rect x="895.4" y="331.6" width="0.8" height="0.8" fill="#444"/>
<rect x="897.6" y="325.0" width="0.8" height="0.8" fill="#444"/>
<rect x="897.6" y="327.20000000000005" width="0.8" height="0.8" fill="#444"/>
<rect x="897.6" y="329.40000000000003" width="0.8" height="0.8" fill="#444"/>
<rect x="897.6" y="331.6" width="0.8" height="0.8" fill="#444"/>
<path d="M890.6 331h5.4M893.6 328.4v5" stroke="#2a7ab8" stroke-width="0.8"/><path d="M900.6 332.2v2.4h-2.4z" fill="#222"/>
<path d="M891 343.6l6.6-6.4 2 2-6.6 6.4z" fill="#fff" stroke="#444" stroke-width="0.7"/><path d="M893 342.6l0.9 0.9M894.6 341l0.9 0.9M896.2 339.4l0.9 0.9" stroke="#444" stroke-width="0.4"/>
</svg>
<div id="app" class="abs"></div><div class="abs" style="left:904px;top:53.2px;width:96px;height:6.2px;background:linear-gradient(#d2d2d2,#c6c6c6)"></div>
<div class="t" style="left:905.2px;top:55px;font-size:4.7px;color:#555;transform:scaleX(0.9335);transform-origin:0 0;">Appearance</div>
<div class="abs" style="left:904.8px;top:60.5px;width:94px;height:365.5px;background:#eeeeee;border:0.5px solid #e2e2e2"></div>
<div class="abs" style="left:905.2px;top:76.8px;width:93.2px;height:349px;background:#fff"></div>
<div class="t" style="left:912.7px;top:66px;font-size:6.2px;color:#6a6a6a;transform:scaleX(0.8774);transform-origin:0 0;">Layers</div>
<div class="t" style="left:942px;top:66px;font-size:6.2px;color:#a8a8a8;transform:scaleX(0.9722);transform-origin:0 0;">Objects</div>
<div class="t" style="left:975.5px;top:66px;font-size:6.2px;color:#a8a8a8;transform:scaleX(0.9188);transform-origin:0 0;">Nets</div>
<div class="abs" style="left:907.6px;top:75.6px;width:26.2px;height:1.1px;background:#e95420"></div>
<div class="abs" style="left:909.2px;top:77px;width:89px;height:7.6px;background:#ececec"></div>
<svg class="abs" style="left:906px;top:78.7px" width="3" height="4" viewBox="0 0 3 4"><path d="M0.2 0.2L2.4 2 0.2 3.8Z" fill="#3050d8"/></svg>
<svg class="abs" style="left:903px;top:76px" width="97" height="186" viewBox="903 76 97 186">
<rect x="910.9" y="78.00" width="6" height="5.6" fill="#c83434"/>
<circle cx="922.9" cy="80.80" r="3.15" fill="#4c4c4c"/><ellipse cx="922.9" cy="80.80" rx="2.3" ry="1.45" fill="#dcdcdc"/><circle cx="922.9" cy="80.80" r="1" fill="#4c4c4c"/>
<rect x="910.9" y="85.65" width="6" height="5.6" fill="#4d7fc4"/>
<circle cx="922.9" cy="88.45" r="3.15" fill="#4c4c4c"/><ellipse cx="922.9" cy="88.45" rx="2.3" ry="1.45" fill="#dcdcdc"/><circle cx="922.9" cy="88.45" r="1" fill="#4c4c4c"/>
<rect x="910.9" y="93.30" width="6" height="5.6" fill="#840084"/>
<circle cx="922.9" cy="96.10" r="3.15" fill="#4c4c4c"/><ellipse cx="922.9" cy="96.10" rx="2.3" ry="1.45" fill="#dcdcdc"/><circle cx="922.9" cy="96.10" r="1" fill="#4c4c4c"/>
<rect x="910.9" y="100.96" width="6" height="5.6" fill="#00007f"/>
<circle cx="922.9" cy="103.76" r="3.15" fill="#4c4c4c"/><ellipse cx="922.9" cy="103.76" rx="2.3" ry="1.45" fill="#dcdcdc"/><circle cx="922.9" cy="103.76" r="1" fill="#4c4c4c"/>
<rect x="910.9" y="108.61" width="6" height="5.6" fill="#b09a96"/>
<circle cx="922.9" cy="111.41" r="3.15" fill="#4c4c4c"/><ellipse cx="922.9" cy="111.41" rx="2.3" ry="1.45" fill="#dcdcdc"/><circle cx="922.9" cy="111.41" r="1" fill="#4c4c4c"/>
<rect x="910.9" y="116.26" width="6" height="5.6" fill="#14b4ac"/>
<circle cx="922.9" cy="119.06" r="3.15" fill="#4c4c4c"/><ellipse cx="922.9" cy="119.06" rx="2.3" ry="1.45" fill="#dcdcdc"/><circle cx="922.9" cy="119.06" r="1" fill="#4c4c4c"/>
<rect x="910.9" y="123.91" width="6" height="5.6" fill="#f2eda1"/>
<circle cx="922.9" cy="126.71" r="2.7" fill="#fff" stroke="#666" stroke-width="0.7"/><path d="M921.2 128.41L924.6 125.01" stroke="#666" stroke-width="0.7"/>
<rect x="910.9" y="131.56" width="6" height="5.6" fill="#e8b2a7"/>
<circle cx="922.9" cy="134.36" r="2.7" fill="#fff" stroke="#666" stroke-width="0.7"/><path d="M921.2 136.06L924.6 132.66" stroke="#666" stroke-width="0.7"/>
<rect x="910.9" y="139.22" width="6" height="5.6" fill="#5b2c80"/>
<circle cx="922.9" cy="142.02" r="3.15" fill="#4c4c4c"/><ellipse cx="922.9" cy="142.02" rx="2.3" ry="1.45" fill="#dcdcdc"/><circle cx="922.9" cy="142.02" r="1" fill="#4c4c4c"/>
<rect x="910.9" y="146.87" width="6" height="5.6" fill="#0c6a5e"/>
<circle cx="922.9" cy="149.67" r="3.15" fill="#4c4c4c"/><ellipse cx="922.9" cy="149.67" rx="2.3" ry="1.45" fill="#dcdcdc"/><circle cx="922.9" cy="149.67" r="1" fill="#4c4c4c"/>
<rect x="910.9" y="154.52" width="6" height="5.6" fill="#c2c2c2"/>
<circle cx="922.9" cy="157.32" r="3.15" fill="#4c4c4c"/><ellipse cx="922.9" cy="157.32" rx="2.3" ry="1.45" fill="#dcdcdc"/><circle cx="922.9" cy="157.32" r="1" fill="#4c4c4c"/>
<rect x="910.9" y="162.17" width="6" height="5.6" fill="#5994dc"/>
<circle cx="922.9" cy="164.97" r="3.15" fill="#4c4c4c"/><ellipse cx="922.9" cy="164.97" rx="2.3" ry="1.45" fill="#dcdcdc"/><circle cx="922.9" cy="164.97" r="1" fill="#4c4c4c"/>
<rect x="910.9" y="169.82" width="6" height="5.6" fill="#b4dbd2"/>
<circle cx="922.9" cy="172.62" r="3.15" fill="#4c4c4c"/><ellipse cx="922.9" cy="172.62" rx="2.3" ry="1.45" fill="#dcdcdc"/><circle cx="922.9" cy="172.62" r="1" fill="#4c4c4c"/>
<rect x="910.9" y="177.48" width="6" height="5.6" fill="#d8c852"/>
<circle cx="922.9" cy="180.28" r="3.15" fill="#4c4c4c"/><ellipse cx="922.9" cy="180.28" rx="2.3" ry="1.45" fill="#dcdcdc"/><circle cx="922.9" cy="180.28" r="1" fill="#4c4c4c"/>
<rect x="910.9" y="185.13" width="6" height="5.6" fill="#d0d2cd"/>
<circle cx="922.9" cy="187.93" r="3.15" fill="#4c4c4c"/><ellipse cx="922.9" cy="187.93" rx="2.3" ry="1.45" fill="#dcdcdc"/><circle cx="922.9" cy="187.93" r="1" fill="#4c4c4c"/>
<rect x="910.9" y="192.78" width="6" height="5.6" fill="#ff26e2"/>
<circle cx="922.9" cy="195.58" r="3.15" fill="#4c4c4c"/><ellipse cx="922.9" cy="195.58" rx="2.3" ry="1.45" fill="#dcdcdc"/><circle cx="922.9" cy="195.58" r="1" fill="#4c4c4c"/>
<rect x="910.9" y="200.43" width="6" height="5.6" fill="#ff26e2"/>
<circle cx="922.9" cy="203.23" r="3.15" fill="#4c4c4c"/><ellipse cx="922.9" cy="203.23" rx="2.3" ry="1.45" fill="#dcdcdc"/><circle cx="922.9" cy="203.23" r="1" fill="#4c4c4c"/>
<rect x="910.9" y="208.08" width="6" height="5.6" fill="#26e9ff"/>
<circle cx="922.9" cy="210.88" r="3.15" fill="#4c4c4c"/><ellipse cx="922.9" cy="210.88" rx="2.3" ry="1.45" fill="#dcdcdc"/><circle cx="922.9" cy="210.88" r="1" fill="#4c4c4c"/>
<rect x="910.9" y="215.74" width="6" height="5.6" fill="#a8a8b0"/>
<circle cx="922.9" cy="218.54" r="3.15" fill="#4c4c4c"/><ellipse cx="922.9" cy="218.54" rx="2.3" ry="1.45" fill="#dcdcdc"/><circle cx="922.9" cy="218.54" r="1" fill="#4c4c4c"/>
<rect x="910.9" y="223.39" width="6" height="5.6" fill="#585d84"/>
<circle cx="922.9" cy="226.19" r="3.15" fill="#4c4c4c"/><ellipse cx="922.9" cy="226.19" rx="2.3" ry="1.45" fill="#dcdcdc"/><circle cx="922.9" cy="226.19" r="1" fill="#4c4c4c"/>
<rect x="910.9" y="231.04" width="6" height="5.6" fill="#c2c2c2"/>
<circle cx="922.9" cy="233.84" r="3.15" fill="#4c4c4c"/><ellipse cx="922.9" cy="233.84" rx="2.3" ry="1.45" fill="#dcdcdc"/><circle cx="922.9" cy="233.84" r="1" fill="#4c4c4c"/>
<rect x="910.9" y="238.69" width="6" height="5.6" fill="#5994dc"/>
<circle cx="922.9" cy="241.49" r="3.15" fill="#4c4c4c"/><ellipse cx="922.9" cy="241.49" rx="2.3" ry="1.45" fill="#dcdcdc"/><circle cx="922.9" cy="241.49" r="1" fill="#4c4c4c"/>
<rect x="910.9" y="246.34" width="6" height="5.6" fill="#b4dbd2"/>
<circle cx="922.9" cy="249.14" r="3.15" fill="#4c4c4c"/><ellipse cx="922.9" cy="249.14" rx="2.3" ry="1.45" fill="#dcdcdc"/><circle cx="922.9" cy="249.14" r="1" fill="#4c4c4c"/>
<rect x="910.9" y="254.00" width="6" height="5.6" fill="#d8c852"/>
<circle cx="922.9" cy="256.80" r="3.15" fill="#4c4c4c"/><ellipse cx="922.9" cy="256.80" rx="2.3" ry="1.45" fill="#dcdcdc"/><circle cx="922.9" cy="256.80" r="1" fill="#4c4c4c"/>
</svg>
<div class="t" style="left:928.2px;top:79px;font-size:5.9px;color:#7a7a7a;transform:scaleX(0.7835);transform-origin:0 0;">F.Cu</div>
<div class="t" style="left:928.2px;top:86px;font-size:5.9px;color:#7a7a7a;transform:scaleX(0.7781);transform-origin:0 0;">B.Cu</div>
<div class="t" style="left:928.2px;top:94px;font-size:5.9px;color:#7a7a7a;transform:scaleX(0.8846);transform-origin:0 0;">F.Adhesive</div>
<div class="t" style="left:928.2px;top:101px;font-size:5.9px;color:#7a7a7a;transform:scaleX(0.8755);transform-origin:0 0;">B.Adhesive</div>
<div class="t" style="left:928.2px;top:109px;font-size:5.9px;color:#7a7a7a;transform:scaleX(0.8445);transform-origin:0 0;">F.Paste</div>
<div class="t" style="left:928.2px;top:117px;font-size:5.9px;color:#7a7a7a;transform:scaleX(0.8333);transform-origin:0 0;">B.Paste</div>
<div class="t" style="left:928.2px;top:124px;font-size:5.9px;color:#7a7a7a;transform:scaleX(0.8342);transform-origin:0 0;">F.Silkscreen</div>
<div class="t" style="left:928.2px;top:132px;font-size:5.9px;color:#7a7a7a;transform:scaleX(0.8305);transform-origin:0 0;">B.Silkscreen</div>
<div class="t" style="left:928.2px;top:140px;font-size:5.9px;color:#7a7a7a;transform:scaleX(0.8523);transform-origin:0 0;">F.Mask</div>
<div class="t" style="left:928.2px;top:147px;font-size:5.9px;color:#7a7a7a;transform:scaleX(0.8452);transform-origin:0 0;">B.Mask</div>
<div class="t" style="left:928.2px;top:155px;font-size:5.9px;color:#7a7a7a;transform:scaleX(0.8744);transform-origin:0 0;">User.Drawings</div>
<div class="t" style="left:928.2px;top:163px;font-size:5.9px;color:#7a7a7a;transform:scaleX(0.8950);transform-origin:0 0;">User.Comments</div>
<div class="t" style="left:928.2px;top:170px;font-size:5.9px;color:#7a7a7a;transform:scaleX(0.8276);transform-origin:0 0;">User.Eco1</div>
<div class="t" style="left:928.2px;top:178px;font-size:5.9px;color:#7a7a7a;transform:scaleX(0.8423);transform-origin:0 0;">User.Eco2</div>
<div class="t" style="left:928.2px;top:186px;font-size:5.9px;color:#7a7a7a;transform:scaleX(0.8577);transform-origin:0 0;">Edge.Cuts</div>
<div class="t" style="left:928.2px;top:193px;font-size:5.9px;color:#7a7a7a;transform:scaleX(0.9214);transform-origin:0 0;">Margin</div>
<div class="t" style="left:928.2px;top:201px;font-size:5.9px;color:#7a7a7a;transform:scaleX(0.9063);transform-origin:0 0;">F.Courtyard</div>
<div class="t" style="left:928.2px;top:209px;font-size:5.9px;color:#7a7a7a;transform:scaleX(0.8970);transform-origin:0 0;">B.Courtyard</div>
<div class="t" style="left:928.2px;top:216px;font-size:5.9px;color:#7a7a7a;transform:scaleX(0.8076);transform-origin:0 0;">F.Fab</div>
<div class="t" style="left:928.2px;top:224px;font-size:5.9px;color:#7a7a7a;transform:scaleX(0.8080);transform-origin:0 0;">B.Fab</div>
<div class="t" style="left:928.2px;top:232px;font-size:5.9px;color:#7a7a7a;transform:scaleX(0.8103);transform-origin:0 0;">User.1</div>
<div class="t" style="left:928.2px;top:239px;font-size:5.9px;color:#7a7a7a;transform:scaleX(0.8220);transform-origin:0 0;">User.2</div>
<div class="t" style="left:928.2px;top:247px;font-size:5.9px;color:#7a7a7a;transform:scaleX(0.8220);transform-origin:0 0;">User.3</div>
<div class="t" style="left:928.2px;top:254px;font-size:5.9px;color:#7a7a7a;transform:scaleX(0.8455);transform-origin:0 0;">User.4</div>
<svg class="abs" style="left:909px;top:419.5px" width="3" height="4" viewBox="0 0 3 4"><path d="M0.3 0.3L2.5 2 0.3 3.7Z" fill="#777"/></svg>
<div class="t" style="left:912.6px;top:419px;font-size:5.8px;color:#a0a0a0;transform:scaleX(0.9186);transform-origin:0 0;">Layer Display Options</div>
<div class="t" style="left:906.9px;top:432px;font-size:5.8px;color:#777;transform:scaleX(0.9096);transform-origin:0 0;">Presets (Ctrl+Tab):</div>
<div class="t" style="left:906.9px;top:455px;font-size:5.8px;color:#777;transform:scaleX(0.9249);transform-origin:0 0;">Viewports (Shift+Tab):</div>
<div class="abs" style="left:906.9px;top:439.4px;width:90px;height:12.6px;background:#fff;border:0.6px solid #e2e2e2;border-radius:2.5px"></div>
<div class="t" style="left:912px;top:443px;font-size:5.8px;color:#888;">---</div>
<svg class="abs" style="left:987px;top:443.9px" width="6" height="4" viewBox="0 0 6 4"><path d="M1 1l2 2 2-2" stroke="#777" stroke-width="0.6" fill="none"/></svg>
<div class="abs" style="left:906.9px;top:462.4px;width:90px;height:12.6px;background:#fff;border:0.6px solid #e2e2e2;border-radius:2.5px"></div>
<div class="t" style="left:912px;top:466px;font-size:5.8px;color:#888;">---</div>
<svg class="abs" style="left:987px;top:466.9px" width="6" height="4" viewBox="0 0 6 4"><path d="M1 1l2 2 2-2" stroke="#777" stroke-width="0.6" fill="none"/></svg>
<div id="self" class="abs"></div><div class="abs" style="left:904px;top:479.7px;width:96px;height:6px;background:linear-gradient(#d2d2d2,#c6c6c6)"></div>
<div class="t" style="left:905.2px;top:481px;font-size:4.6px;color:#555;transform:scaleX(0.9806);transform-origin:0 0;">Selection Filter</div>
<div class="cb" style="left:908px;top:489.3px;width:6.2px;height:6.2px"></div><svg class="abs" style="left:908px;top:489.3px" width="6.2" height="6.2" viewBox="0 0 6 6"><path d="M1.4 3.1l1.2 1.2 2.1-2.4" stroke="#fff" stroke-width="0.85" fill="none"/></svg>
<div class="t" style="left:915.9px;top:491px;font-size:5.8px;color:#666;transform:scaleX(0.8947);transform-origin:0 0;">All items</div>
<div class="cbo" style="left:951.2px;top:489.3px;width:6.2px;height:6.2px"></div>
<div class="t" style="left:958.8px;top:491px;font-size:5.8px;color:#666;transform:scaleX(0.9252);transform-origin:0 0;">Locked items</div>
<div class="cb" style="left:908px;top:497.72px;width:6.2px;height:6.2px"></div><svg class="abs" style="left:908px;top:497.72px" width="6.2" height="6.2" viewBox="0 0 6 6"><path d="M1.4 3.1l1.2 1.2 2.1-2.4" stroke="#fff" stroke-width="0.85" fill="none"/></svg>
<div class="t" style="left:915.9px;top:499px;font-size:5.8px;color:#666;transform:scaleX(0.9619);transform-origin:0 0;">Footprints</div>
<div class="cb" style="left:951.2px;top:497.72px;width:6.2px;height:6.2px"></div><svg class="abs" style="left:951.2px;top:497.72px" width="6.2" height="6.2" viewBox="0 0 6 6"><path d="M1.4 3.1l1.2 1.2 2.1-2.4" stroke="#fff" stroke-width="0.85" fill="none"/></svg>
<div class="t" style="left:958.8px;top:499px;font-size:5.8px;color:#666;transform:scaleX(0.9586);transform-origin:0 0;">Text</div>
<div class="cb" style="left:908px;top:506.14px;width:6.2px;height:6.2px"></div><svg class="abs" style="left:908px;top:506.14px" width="6.2" height="6.2" viewBox="0 0 6 6"><path d="M1.4 3.1l1.2 1.2 2.1-2.4" stroke="#fff" stroke-width="0.85" fill="none"/></svg>
<div class="t" style="left:915.9px;top:507px;font-size:5.8px;color:#666;transform:scaleX(0.8495);transform-origin:0 0;">Tracks</div>
<div class="cb" style="left:951.2px;top:506.14px;width:6.2px;height:6.2px"></div><svg class="abs" style="left:951.2px;top:506.14px" width="6.2" height="6.2" viewBox="0 0 6 6"><path d="M1.4 3.1l1.2 1.2 2.1-2.4" stroke="#fff" stroke-width="0.85" fill="none"/></svg>
<div class="t" style="left:958.8px;top:507px;font-size:5.8px;color:#666;transform:scaleX(0.8670);transform-origin:0 0;">Vias</div>
<div class="cb" style="left:908px;top:514.56px;width:6.2px;height:6.2px"></div><svg class="abs" style="left:908px;top:514.56px" width="6.2" height="6.2" viewBox="0 0 6 6"><path d="M1.4 3.1l1.2 1.2 2.1-2.4" stroke="#fff" stroke-width="0.85" fill="none"/></svg>
<div class="t" style="left:915.9px;top:516px;font-size:5.8px;color:#666;transform:scaleX(0.8170);transform-origin:0 0;">Pads</div>
<div class="cb" style="left:951.2px;top:514.56px;width:6.2px;height:6.2px"></div><svg class="abs" style="left:951.2px;top:514.56px" width="6.2" height="6.2" viewBox="0 0 6 6"><path d="M1.4 3.1l1.2 1.2 2.1-2.4" stroke="#fff" stroke-width="0.85" fill="none"/></svg>
<div class="t" style="left:958.8px;top:516px;font-size:5.8px;color:#666;transform:scaleX(0.8964);transform-origin:0 0;">Graphics</div>
<div class="cb" style="left:908px;top:522.98px;width:6.2px;height:6.2px"></div><svg class="abs" style="left:908px;top:522.98px" width="6.2" height="6.2" viewBox="0 0 6 6"><path d="M1.4 3.1l1.2 1.2 2.1-2.4" stroke="#fff" stroke-width="0.85" fill="none"/></svg>
<div class="t" style="left:915.9px;top:524px;font-size:5.8px;color:#666;transform:scaleX(0.8496);transform-origin:0 0;">Zones</div>
<div class="cb" style="left:951.2px;top:522.98px;width:6.2px;height:6.2px"></div><svg class="abs" style="left:951.2px;top:522.98px" width="6.2" height="6.2" viewBox="0 0 6 6"><path d="M1.4 3.1l1.2 1.2 2.1-2.4" stroke="#fff" stroke-width="0.85" fill="none"/></svg>
<div class="t" style="left:958.8px;top:524px;font-size:5.8px;color:#666;transform:scaleX(0.8745);transform-origin:0 0;">Rule Areas</div>
<div class="cb" style="left:908px;top:531.4px;width:6.2px;height:6.2px"></div><svg class="abs" style="left:908px;top:531.4px" width="6.2" height="6.2" viewBox="0 0 6 6"><path d="M1.4 3.1l1.2 1.2 2.1-2.4" stroke="#fff" stroke-width="0.85" fill="none"/></svg>
<div class="t" style="left:915.9px;top:533px;font-size:5.8px;color:#666;transform:scaleX(0.9077);transform-origin:0 0;">Dimensions</div>
<div class="cb" style="left:951.2px;top:531.4px;width:6.2px;height:6.2px"></div><svg class="abs" style="left:951.2px;top:531.4px" width="6.2" height="6.2" viewBox="0 0 6 6"><path d="M1.4 3.1l1.2 1.2 2.1-2.4" stroke="#fff" stroke-width="0.85" fill="none"/></svg>
<div class="t" style="left:958.8px;top:533px;font-size:5.8px;color:#666;transform:scaleX(0.9477);transform-origin:0 0;">Other items</div>
<div id="msg" class="abs"></div>
<div class="t" style="left:3.5px;top:543px;font-size:5.6px;color:#9a9a9a;">Pads</div>
<div class="t" style="left:3.5px;top:550px;font-size:5.6px;color:#9a9a9a;">193</div>
<div class="t" style="left:29px;top:543px;font-size:5.6px;color:#9a9a9a;">Vias</div>
<div class="t" style="left:29px;top:550px;font-size:5.6px;color:#9a9a9a;">45</div>
<div class="t" style="left:53.5px;top:543px;font-size:5.6px;color:#9a9a9a;">Track Segments</div>
<div class="t" style="left:53.5px;top:550px;font-size:5.6px;color:#9a9a9a;">422</div>
<div class="t" style="left:108px;top:543px;font-size:5.6px;color:#9a9a9a;">Nets</div>
<div class="t" style="left:108px;top:550px;font-size:5.6px;color:#9a9a9a;">53</div>
<div class="t" style="left:132.5px;top:543px;font-size:5.6px;color:#9a9a9a;">Unrouted</div>
<div class="t" style="left:132.5px;top:550px;font-size:5.6px;color:#9a9a9a;">5</div>
<div id="status" class="abs"></div>
<div class="t" style="left:0.5px;top:558px;font-size:5.9px;color:#555;transform:scaleX(1.0154);transform-origin:0 0;">File '/home/kai/projects/pcbs/working/devboard/PCB_DESIGN/devboard.kicad_pcb' saved.</div>
<div class="t" style="left:506px;top:558px;font-size:5.9px;color:#555;transform:scaleX(0.8980);transform-origin:0 0;white-space:pre;">Z 5.54</div>
<div class="t" style="left:540px;top:558px;font-size:5.9px;color:#555;transform:scaleX(0.9658);transform-origin:0 0;white-space:pre;">X 118.9000  Y 80.6000</div>
<div class="t" style="left:616px;top:558px;font-size:5.9px;color:#555;transform:scaleX(1.0121);transform-origin:0 0;white-space:pre;">dx 118.9000  dy 80.6000  dist 143.6439</div>
<div class="t" style="left:740px;top:558px;font-size:5.9px;color:#555;transform:scaleX(1.0175);transform-origin:0 0;white-space:pre;">grid 0.1000</div>
<div class="t" style="left:828.5px;top:558px;font-size:5.9px;color:#555;transform:scaleX(0.7631);transform-origin:0 0;white-space:pre;">mm</div>
<div class="t" style="left:856px;top:558px;font-size:5.9px;color:#555;transform:scaleX(1.0134);transform-origin:0 0;white-space:pre;">Select item(s)</div>
<div class="abs" style="left:362px;top:183.3px;width:280px;height:226.5px;background:#fafafa;border-radius:4px 4px 0 0;box-shadow:0 0 0 0.6px rgba(0,0,0,0.45),0 2px 7px rgba(0,0,0,0.3);overflow:hidden">
<div class="abs" style="left:0;top:0;width:280px;height:14.3px;background:#ebebeb;border-bottom:0.6px solid #d4d4d4"></div>
</div>
<div class="t" style="left:472.7px;top:187px;font-size:6.3px;color:#3d3d3d;font-weight:bold;transform:scaleX(0.8782);transform-origin:0 0;">Design Rules Checker</div>
<div class="abs" style="left:604px;top:186.5px;width:8px;height:8px;border-radius:4px;background:#e2e2e2"></div>
<div class="abs" style="left:617.5px;top:186.5px;width:8px;height:8px;border-radius:4px;background:#e2e2e2"></div>
<div class="abs" style="left:631.3px;top:186.5px;width:8px;height:8px;border-radius:4px;background:#e2e2e2"></div>
<svg class="abs" style="left:600px;top:184px" width="42" height="12" viewBox="600 184 42 12"><g stroke="#555" stroke-width="0.6" fill="none"><path d="M606.2 191.6h3.2"/><rect x="620.2" y="188.8" width="2.7" height="2.9"/><path d="M633.9 189.1l2.8 2.8m0-2.8l-2.8 2.8"/></g></svg>
<div class="cb" style="left:368.2px;top:204.4px;width:6.6px;height:6.6px"></div><svg class="abs" style="left:368.2px;top:204.4px" width="6.6" height="6.6" viewBox="0 0 6 6"><path d="M1.4 3.1l1.2 1.2 2.1-2.4" stroke="#fff" stroke-width="0.85" fill="none"/></svg>
<div class="t" style="left:376.8px;top:204px;font-size:6.2px;color:#585858;transform:scaleX(0.9614);transform-origin:0 0;">Refill all zones before performing DRC</div>
<div class="cb" style="left:508.2px;top:204.4px;width:6.6px;height:6.6px"></div><svg class="abs" style="left:508.2px;top:204.4px" width="6.6" height="6.6" viewBox="0 0 6 6"><path d="M1.4 3.1l1.2 1.2 2.1-2.4" stroke="#fff" stroke-width="0.85" fill="none"/></svg>
<div class="t" style="left:516.2px;top:204px;font-size:6.2px;color:#585858;transform:scaleX(0.9585);transform-origin:0 0;">Test for parity between PCB and schematic</div>
<div class="cbo" style="left:368.2px;top:215.2px;width:6.6px;height:6.6px"></div>
<div class="t" style="left:376.8px;top:215px;font-size:6.2px;color:#585858;transform:scaleX(0.9813);transform-origin:0 0;">Report all errors for each track</div>
<div class="abs" style="left:365.5px;top:230px;width:273.5px;height:144.5px;border:0.6px solid #dcdcdc;background:#fafafa"></div>
<div class="abs" style="left:365.5px;top:245.2px;width:273.5px;height:0.6px;background:#dcdcdc"></div>
<div class="abs" style="left:369.5px;top:231.3px;width:48.3px;height:14.4px;border:0.6px solid #f0c4b4;border-bottom:1.2px solid #e95420;border-radius:1.5px 1.5px 0 0"></div>
<div class="t" style="left:374.1px;top:234px;font-size:6.2px;color:#585858;transform:scaleX(0.9953);transform-origin:0 0;">Violations (11)</div>
<div class="t" style="left:425.7px;top:234px;font-size:6.2px;color:#6a6a6a;transform:scaleX(0.9474);transform-origin:0 0;">Unconnected Items (5)</div>
<div class="t" style="left:498.6px;top:234px;font-size:6.2px;color:#6a6a6a;transform:scaleX(0.9569);transform-origin:0 0;">Schematic Parity (0)</div>
<div class="t" style="left:565px;top:234px;font-size:6.2px;color:#6a6a6a;transform:scaleX(0.9282);transform-origin:0 0;">Ignored Tests (5)</div>
<div class="abs" style="left:368.5px;top:247.2px;width:267.7px;height:121.6px;border:0.6px solid #cfcfcf;background:#fff;overflow:hidden">
<svg class="abs" style="left:1.5px;top:3.80px" width="4" height="3" viewBox="0 0 4 3"><path d="M0.5 0.6l1.5 1.5 1.5-1.5" stroke="#777" stroke-width="0.55" fill="none"/></svg>
<div class="t" style="left:8.2px;top:2px;font-size:6.35px;color:#222;font-weight:bold;transform:scaleX(0.8956);transform-origin:0 0;">Error: Thermal relief connection to zone incomplete (layer F.Cu; zone min spoke count 2; actual 1)</div>
<div class="t" style="left:15.5px;top:11px;font-size:6.2px;color:#303030;transform:scaleX(0.9211);transform-origin:0 0;">Zone [GND] on F.Cu and B.Cu, priority 0</div>
<div class="t" style="left:15.5px;top:21px;font-size:6.2px;color:#303030;transform:scaleX(0.8990);transform-origin:0 0;">Pad 2 [GND] of C5 on F.Cu</div>
<svg class="abs" style="left:1.5px;top:32.78px" width="4" height="3" viewBox="0 0 4 3"><path d="M0.5 0.6l1.5 1.5 1.5-1.5" stroke="#777" stroke-width="0.55" fill="none"/></svg>
<div class="t" style="left:8.2px;top:31px;font-size:6.35px;color:#222;font-weight:bold;transform:scaleX(0.8956);transform-origin:0 0;">Error: Thermal relief connection to zone incomplete (layer F.Cu; zone min spoke count 2; actual 1)</div>
<div class="t" style="left:15.5px;top:40px;font-size:6.2px;color:#303030;transform:scaleX(0.9211);transform-origin:0 0;">Zone [GND] on F.Cu and B.Cu, priority 0</div>
<div class="t" style="left:15.5px;top:50px;font-size:6.2px;color:#303030;transform:scaleX(0.8990);transform-origin:0 0;">Pad 2 [GND] of C4 on F.Cu</div>
<svg class="abs" style="left:1.5px;top:61.76px" width="4" height="3" viewBox="0 0 4 3"><path d="M0.5 0.6l1.5 1.5 1.5-1.5" stroke="#777" stroke-width="0.55" fill="none"/></svg>
<div class="t" style="left:8.2px;top:60px;font-size:6.35px;color:#222;font-weight:bold;transform:scaleX(0.8956);transform-origin:0 0;">Error: Thermal relief connection to zone incomplete (layer F.Cu; zone min spoke count 2; actual 1)</div>
<div class="t" style="left:15.5px;top:69px;font-size:6.2px;color:#303030;transform:scaleX(0.9211);transform-origin:0 0;">Zone [GND] on F.Cu and B.Cu, priority 0</div>
<div class="t" style="left:15.5px;top:79px;font-size:6.2px;color:#303030;transform:scaleX(0.8990);transform-origin:0 0;">Pad 2 [GND] of C2 on F.Cu</div>
<svg class="abs" style="left:1.5px;top:90.74px" width="4" height="3" viewBox="0 0 4 3"><path d="M0.5 0.6l1.5 1.5 1.5-1.5" stroke="#777" stroke-width="0.55" fill="none"/></svg>
<div class="t" style="left:8.2px;top:89px;font-size:6.35px;color:#222;font-weight:bold;transform:scaleX(0.8967);transform-origin:0 0;">Error: Thermal relief connection to zone incomplete (layer B.Cu; 2 spokes connected to isolated island)</div>
<div class="t" style="left:15.5px;top:98px;font-size:6.2px;color:#303030;transform:scaleX(0.9211);transform-origin:0 0;">Zone [GND] on F.Cu and B.Cu, priority 0</div>
<div class="t" style="left:15.5px;top:108px;font-size:6.2px;color:#303030;transform:scaleX(0.9156);transform-origin:0 0;">PTH pad 13 [GND] of J3</div>
<svg class="abs" style="left:1.5px;top:119.72px" width="4" height="3" viewBox="0 0 4 3"><path d="M0.5 0.6l1.5 1.5 1.5-1.5" stroke="#777" stroke-width="0.55" fill="none"/></svg>
<div class="t" style="left:8.2px;top:118px;font-size:6.35px;color:#222;font-weight:bold;transform:scaleX(0.8956);transform-origin:0 0;">Error: Thermal relief connection to zone incomplete (layer F.Cu; zone min spoke count 2; actual 1)</div>
</div>
<div class="t" style="left:367.8px;top:380px;font-size:6.2px;color:#585858;transform:scaleX(0.8894);transform-origin:0 0;">Show:</div>
<div class="cbo" style="left:390px;top:380.1px;width:6.6px;height:6.6px"></div>
<div class="t" style="left:397.9px;top:380px;font-size:6.2px;color:#585858;transform:scaleX(1.0304);transform-origin:0 0;">All</div>
<div class="cb" style="left:426.4px;top:380.1px;width:6.6px;height:6.6px"></div><svg class="abs" style="left:426.4px;top:380.1px" width="6.6" height="6.6" viewBox="0 0 6 6"><path d="M1.4 3.1l1.2 1.2 2.1-2.4" stroke="#fff" stroke-width="0.85" fill="none"/></svg>
<div class="t" style="left:434.4px;top:380px;font-size:6.2px;color:#585858;transform:scaleX(0.9737);transform-origin:0 0;">Errors</div>
<div class="abs" style="left:454.3px;top:379.5px;width:11.7px;height:8px;border-radius:4px;background:#e01010"></div>
<div class="t" style="left:456.8px;top:381px;font-size:5.9px;color:#fff;font-weight:bold;transform:scaleX(1.0210);transform-origin:0 0;">16</div>
<div class="cbo" style="left:479.8px;top:380.1px;width:6.6px;height:6.6px"></div>
<div class="t" style="left:487.6px;top:380px;font-size:6.2px;color:#585858;transform:scaleX(0.9419);transform-origin:0 0;">Warnings</div>
<div class="abs" style="left:515.8px;top:379.5px;width:15.2px;height:8px;border-radius:4px;background:#f4f01c"></div>
<div class="t" style="left:518.5px;top:381px;font-size:5.9px;color:#333;font-weight:bold;transform:scaleX(1.0299);transform-origin:0 0;">116</div>
<div class="cbo" style="left:541.2px;top:380.1px;width:6.6px;height:6.6px"></div>
<div class="t" style="left:549.2px;top:380px;font-size:6.2px;color:#585858;transform:scaleX(0.9061);transform-origin:0 0;">Exclusions</div>
<div class="abs" style="left:602.3px;top:377px;width:33.80000000000007px;height:13.199999999999989px;border:0.6px solid #d8d8d8;border-radius:2.5px;background:#fff"></div>
<div class="t" style="left:609.8px;top:380px;font-size:6.2px;color:#585858;transform:scaleX(0.8967);transform-origin:0 0;">Save…</div>
<div class="abs" style="left:367.8px;top:394.7px;width:51.599999999999966px;height:12.699999999999989px;border:0.6px solid #d8d8d8;border-radius:2.5px;background:#fff"></div>
<div class="t" style="left:374.5px;top:398px;font-size:6.2px;color:#585858;transform:scaleX(0.9650);transform-origin:0 0;">Delete Marker</div>
<div class="abs" style="left:423.4px;top:394.7px;width:61.60000000000002px;height:12.699999999999989px;border:0.6px solid #d8d8d8;border-radius:2.5px;background:#fff"></div>
<div class="t" style="left:430.2px;top:398px;font-size:6.2px;color:#585858;transform:scaleX(0.9797);transform-origin:0 0;">Delete All Markers</div>
<div class="abs" style="left:563.2px;top:394.7px;width:33.0px;height:12.699999999999989px;border:0.6px solid #d8d8d8;border-radius:2.5px;background:#fff"></div>
<div class="t" style="left:573px;top:398px;font-size:6.2px;color:#585858;transform:scaleX(0.8845);transform-origin:0 0;">Close</div>
<div class="abs" style="left:599.5px;top:394.7px;width:35.799999999999955px;height:12.699999999999989px;border:0.6px solid #d8d8d8;border-radius:2.5px;background:#fff"></div>
<div class="t" style="left:606.5px;top:398px;font-size:6.2px;color:#585858;transform:scaleX(0.8345);transform-origin:0 0;">Run DRC</div>
</div></body></html>
